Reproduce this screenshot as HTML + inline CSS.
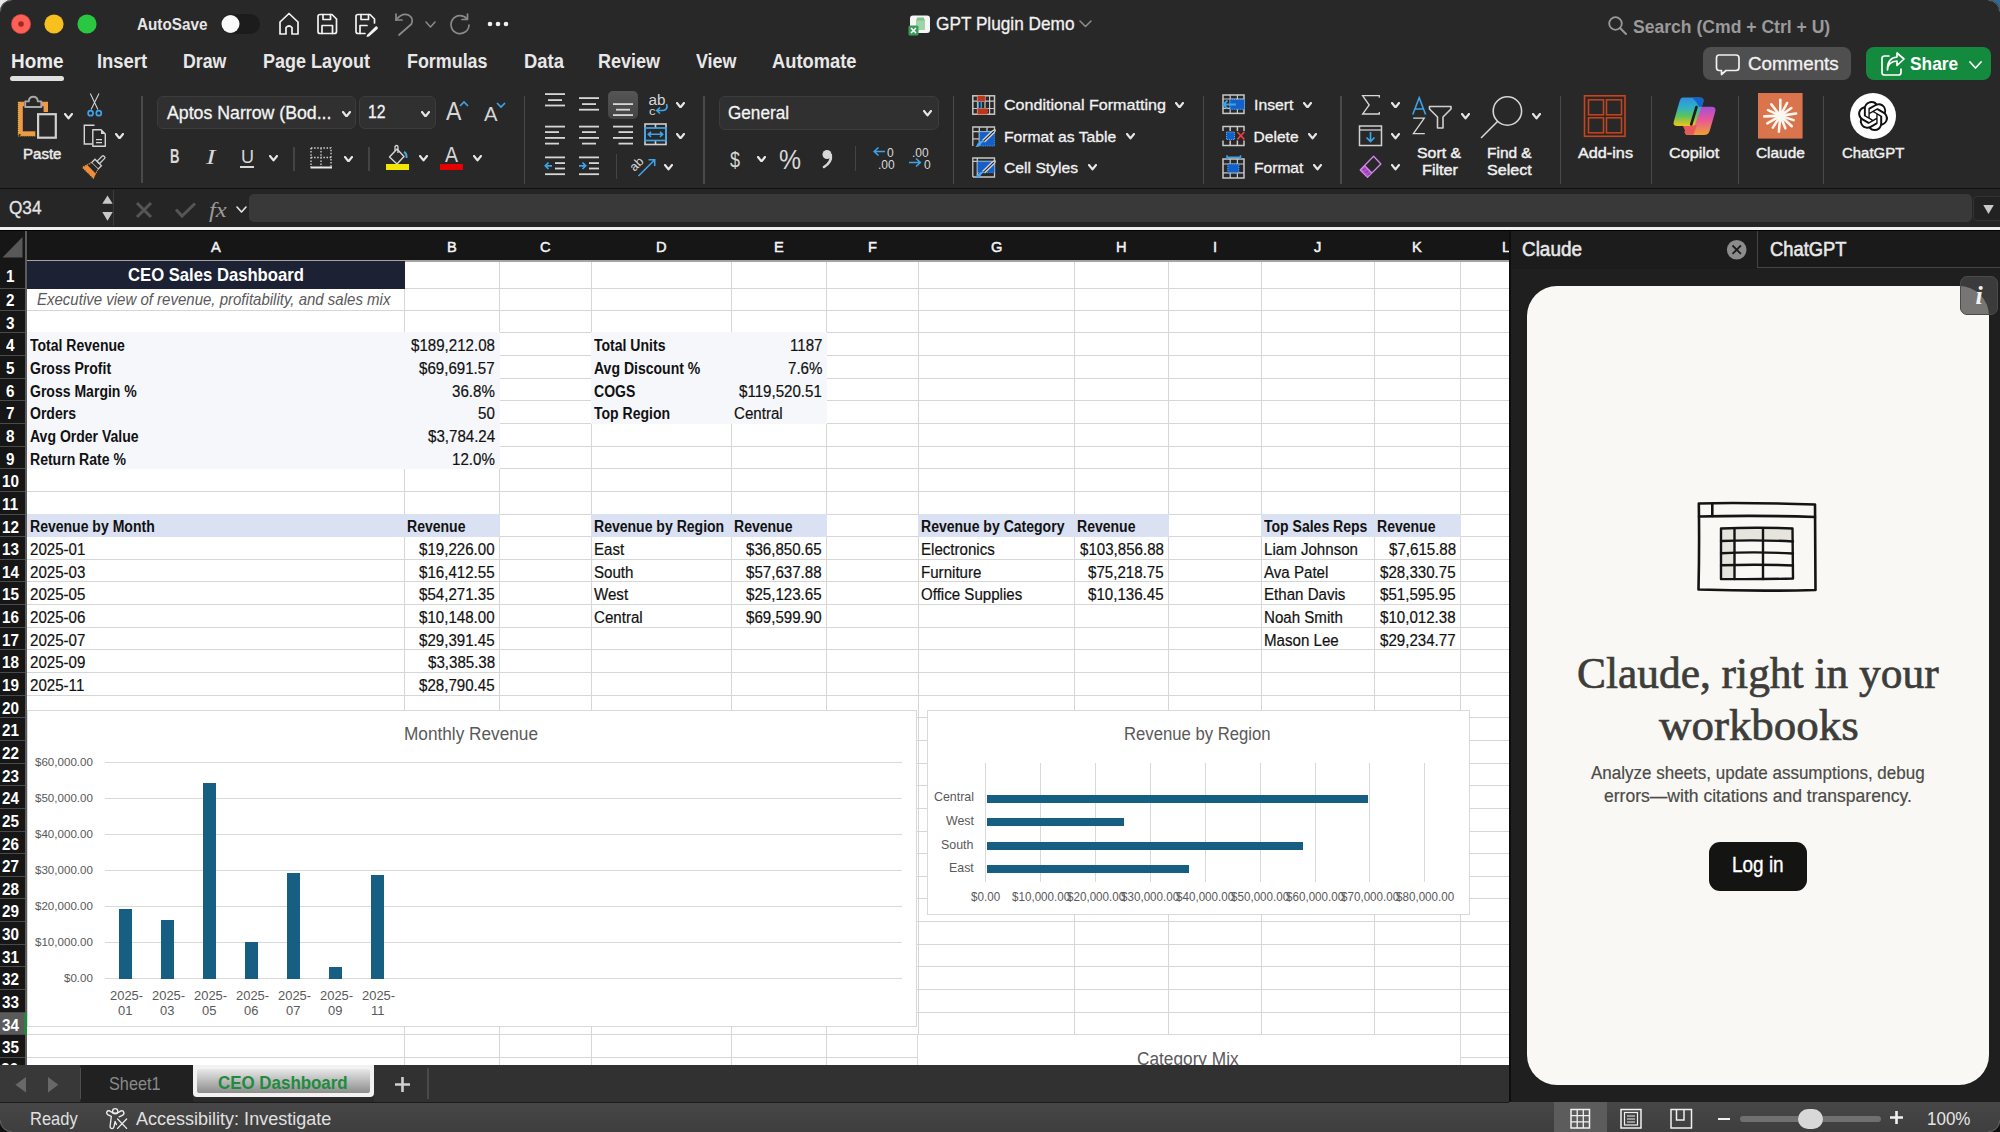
<!DOCTYPE html>
<html><head><meta charset="utf-8"><title>Excel</title>
<style>
html,body{margin:0;padding:0;width:2000px;height:1132px;overflow:hidden;background:#000;}
body{position:relative;font-family:"Liberation Sans", sans-serif;}
</style></head><body>
<div style="position:absolute;left:0.00px;top:0.00px;width:2000.00px;height:1132.00px;background:#000;"></div>
<div style="position:absolute;left:0.00px;top:0.00px;width:2000.00px;height:189.00px;background:#282828;"></div>
<div style="position:absolute;left:0.00px;top:187.50px;width:2000.00px;height:2.50px;background:#101010;"></div>
<div style="position:absolute;left:0.00px;top:189.00px;width:2000.00px;height:38.00px;background:#252525;"></div>
<div style="position:absolute;left:0.00px;top:226.80px;width:2000.00px;height:3.00px;background:#efefef;"></div>
<div style="position:absolute;left:0.00px;top:230.50px;width:1509.00px;height:835.00px;background:#ffffff;"></div>
<div style="position:absolute;left:0.00px;top:230.50px;width:1509.00px;height:30.00px;background:#161616;"></div>
<div style="position:absolute;left:0.00px;top:260.40px;width:1509.00px;height:1.60px;background:#a4a4a4;"></div>
<div style="position:absolute;left:0.00px;top:230.50px;width:25.50px;height:835.00px;background:#161616;"></div>
<div style="position:absolute;left:25.30px;top:230.50px;width:1.80px;height:835.00px;background:#5c5c5c;"></div>
<svg style="position:absolute;left:0.00px;top:230.00px;" width="27.00" height="31.00" viewBox="0 0 27.00 31.00"><polygon points="2.5,27.5 22.5,27.5 22.5,7" fill="#585858"/></svg>
<svg style="position:absolute;left:0.00px;top:0.00px;shape-rendering:crispEdges;" width="1509.00" height="1065.00" viewBox="0 0 1509.00 1065.00"><rect x="27" y="288" width="1482" height="1" fill="#d6d6d6"/><rect x="27" y="310" width="1482" height="1" fill="#d6d6d6"/><rect x="27" y="332" width="1482" height="1" fill="#d6d6d6"/><rect x="27" y="355" width="1482" height="1" fill="#d6d6d6"/><rect x="27" y="378" width="1482" height="1" fill="#d6d6d6"/><rect x="27" y="400" width="1482" height="1" fill="#d6d6d6"/><rect x="27" y="423" width="1482" height="1" fill="#d6d6d6"/><rect x="27" y="446" width="1482" height="1" fill="#d6d6d6"/><rect x="27" y="468" width="1482" height="1" fill="#d6d6d6"/><rect x="27" y="491" width="1482" height="1" fill="#d6d6d6"/><rect x="27" y="514" width="1482" height="1" fill="#d6d6d6"/><rect x="27" y="536" width="1482" height="1" fill="#d6d6d6"/><rect x="27" y="559" width="1482" height="1" fill="#d6d6d6"/><rect x="27" y="581" width="1482" height="1" fill="#d6d6d6"/><rect x="27" y="604" width="1482" height="1" fill="#d6d6d6"/><rect x="27" y="627" width="1482" height="1" fill="#d6d6d6"/><rect x="27" y="649" width="1482" height="1" fill="#d6d6d6"/><rect x="27" y="672" width="1482" height="1" fill="#d6d6d6"/><rect x="27" y="695" width="1482" height="1" fill="#d6d6d6"/><rect x="27" y="717" width="1482" height="1" fill="#d6d6d6"/><rect x="27" y="740" width="1482" height="1" fill="#d6d6d6"/><rect x="27" y="763" width="1482" height="1" fill="#d6d6d6"/><rect x="27" y="785" width="1482" height="1" fill="#d6d6d6"/><rect x="27" y="808" width="1482" height="1" fill="#d6d6d6"/><rect x="27" y="831" width="1482" height="1" fill="#d6d6d6"/><rect x="27" y="853" width="1482" height="1" fill="#d6d6d6"/><rect x="27" y="876" width="1482" height="1" fill="#d6d6d6"/><rect x="27" y="898" width="1482" height="1" fill="#d6d6d6"/><rect x="27" y="921" width="1482" height="1" fill="#d6d6d6"/><rect x="27" y="944" width="1482" height="1" fill="#d6d6d6"/><rect x="27" y="966" width="1482" height="1" fill="#d6d6d6"/><rect x="27" y="989" width="1482" height="1" fill="#d6d6d6"/><rect x="27" y="1012" width="1482" height="1" fill="#d6d6d6"/><rect x="27" y="1034" width="1482" height="1" fill="#d6d6d6"/><rect x="27" y="1057" width="1482" height="1" fill="#d6d6d6"/><rect x="404" y="262" width="1" height="803" fill="#d6d6d6"/><rect x="499" y="262" width="1" height="803" fill="#d6d6d6"/><rect x="591" y="262" width="1" height="803" fill="#d6d6d6"/><rect x="731" y="262" width="1" height="803" fill="#d6d6d6"/><rect x="826" y="262" width="1" height="803" fill="#d6d6d6"/><rect x="918" y="262" width="1" height="803" fill="#d6d6d6"/><rect x="1074" y="262" width="1" height="803" fill="#d6d6d6"/><rect x="1168" y="262" width="1" height="803" fill="#d6d6d6"/><rect x="1261" y="262" width="1" height="803" fill="#d6d6d6"/><rect x="1374" y="262" width="1" height="803" fill="#d6d6d6"/><rect x="1460" y="262" width="1" height="803" fill="#d6d6d6"/><rect x="1552" y="262" width="1" height="803" fill="#d6d6d6"/><rect x="27" y="261" width="378" height="28" fill="#1c2233"/><rect x="27" y="332" width="473" height="137" fill="#f5f7fb"/><rect x="591" y="332" width="236" height="92" fill="#f5f7fb"/><rect x="27" y="514" width="473" height="23" fill="#d9e1f2"/><rect x="591" y="514" width="236" height="23" fill="#d9e1f2"/><rect x="918" y="514" width="251" height="23" fill="#d9e1f2"/><rect x="1261" y="514" width="200" height="23" fill="#d9e1f2"/></svg>
<div style="position:absolute;white-space:nowrap;font-family:'Liberation Sans', sans-serif;font-size:15.41px;line-height:15.41px;font-weight:400;color:#f4f4f4;top:238.95px;-webkit-text-stroke:0.50px #f4f4f4;left:210.92px;transform-origin:0 0;transform:scaleX(0.9500);">A</div>
<div style="position:absolute;white-space:nowrap;font-family:'Liberation Sans', sans-serif;font-size:15.41px;line-height:15.41px;font-weight:400;color:#f4f4f4;top:238.95px;-webkit-text-stroke:0.50px #f4f4f4;left:446.92px;transform-origin:0 0;transform:scaleX(0.9500);">B</div>
<div style="position:absolute;white-space:nowrap;font-family:'Liberation Sans', sans-serif;font-size:15.41px;line-height:15.41px;font-weight:400;color:#f4f4f4;top:238.95px;-webkit-text-stroke:0.50px #f4f4f4;left:540.01px;transform-origin:0 0;transform:scaleX(0.9500);">C</div>
<div style="position:absolute;white-space:nowrap;font-family:'Liberation Sans', sans-serif;font-size:15.41px;line-height:15.41px;font-weight:400;color:#f4f4f4;top:238.95px;-webkit-text-stroke:0.50px #f4f4f4;left:656.01px;transform-origin:0 0;transform:scaleX(0.9500);">D</div>
<div style="position:absolute;white-space:nowrap;font-family:'Liberation Sans', sans-serif;font-size:15.41px;line-height:15.41px;font-weight:400;color:#f4f4f4;top:238.95px;-webkit-text-stroke:0.50px #f4f4f4;left:773.92px;transform-origin:0 0;transform:scaleX(0.9500);">E</div>
<div style="position:absolute;white-space:nowrap;font-family:'Liberation Sans', sans-serif;font-size:15.41px;line-height:15.41px;font-weight:400;color:#f4f4f4;top:238.95px;-webkit-text-stroke:0.50px #f4f4f4;left:867.84px;transform-origin:0 0;transform:scaleX(0.9500);">F</div>
<div style="position:absolute;white-space:nowrap;font-family:'Liberation Sans', sans-serif;font-size:15.41px;line-height:15.41px;font-weight:400;color:#f4f4f4;top:238.95px;-webkit-text-stroke:0.50px #f4f4f4;left:990.61px;transform-origin:0 0;transform:scaleX(0.9500);">G</div>
<div style="position:absolute;white-space:nowrap;font-family:'Liberation Sans', sans-serif;font-size:15.41px;line-height:15.41px;font-weight:400;color:#f4f4f4;top:238.95px;-webkit-text-stroke:0.50px #f4f4f4;left:1116.01px;transform-origin:0 0;transform:scaleX(0.9500);">H</div>
<div style="position:absolute;white-space:nowrap;font-family:'Liberation Sans', sans-serif;font-size:15.41px;line-height:15.41px;font-weight:400;color:#f4f4f4;top:238.95px;-webkit-text-stroke:0.50px #f4f4f4;left:1212.77px;transform-origin:0 0;transform:scaleX(0.9500);">I</div>
<div style="position:absolute;white-space:nowrap;font-family:'Liberation Sans', sans-serif;font-size:15.41px;line-height:15.41px;font-weight:400;color:#f4f4f4;top:238.95px;-webkit-text-stroke:0.50px #f4f4f4;left:1314.14px;transform-origin:0 0;transform:scaleX(0.9500);">J</div>
<div style="position:absolute;white-space:nowrap;font-family:'Liberation Sans', sans-serif;font-size:15.41px;line-height:15.41px;font-weight:400;color:#f4f4f4;top:238.95px;-webkit-text-stroke:0.50px #f4f4f4;left:1412.42px;transform-origin:0 0;transform:scaleX(0.9500);">K</div>
<div style="position:absolute;white-space:nowrap;font-family:'Liberation Sans', sans-serif;font-size:15.41px;line-height:15.41px;font-weight:400;color:#f4f4f4;top:238.95px;-webkit-text-stroke:0.50px #f4f4f4;left:1502.24px;transform-origin:0 0;transform:scaleX(0.9500);">L</div>
<div style="position:absolute;left:0.00px;top:288.00px;width:25.30px;height:1.20px;background:#4a4a4a;"></div>
<div style="position:absolute;white-space:nowrap;font-family:'Liberation Sans', sans-serif;font-size:16.42px;line-height:16.42px;font-weight:700;color:#ffffff;top:267.99px;left:5.76px;transform-origin:0 0;transform:scaleX(0.9300);">1</div>
<div style="position:absolute;left:0.00px;top:310.00px;width:25.30px;height:1.20px;background:#4a4a4a;"></div>
<div style="position:absolute;white-space:nowrap;font-family:'Liberation Sans', sans-serif;font-size:16.42px;line-height:16.42px;font-weight:700;color:#ffffff;top:292.14px;left:5.76px;transform-origin:0 0;transform:scaleX(0.9300);">2</div>
<div style="position:absolute;left:0.00px;top:332.00px;width:25.30px;height:1.20px;background:#4a4a4a;"></div>
<div style="position:absolute;white-space:nowrap;font-family:'Liberation Sans', sans-serif;font-size:16.42px;line-height:16.42px;font-weight:700;color:#ffffff;top:314.78px;left:5.76px;transform-origin:0 0;transform:scaleX(0.9300);">3</div>
<div style="position:absolute;left:0.00px;top:355.00px;width:25.30px;height:1.20px;background:#4a4a4a;"></div>
<div style="position:absolute;white-space:nowrap;font-family:'Liberation Sans', sans-serif;font-size:16.42px;line-height:16.42px;font-weight:700;color:#ffffff;top:337.42px;left:5.76px;transform-origin:0 0;transform:scaleX(0.9300);">4</div>
<div style="position:absolute;left:0.00px;top:378.00px;width:25.30px;height:1.20px;background:#4a4a4a;"></div>
<div style="position:absolute;white-space:nowrap;font-family:'Liberation Sans', sans-serif;font-size:16.42px;line-height:16.42px;font-weight:700;color:#ffffff;top:360.06px;left:5.76px;transform-origin:0 0;transform:scaleX(0.9300);">5</div>
<div style="position:absolute;left:0.00px;top:400.00px;width:25.30px;height:1.20px;background:#4a4a4a;"></div>
<div style="position:absolute;white-space:nowrap;font-family:'Liberation Sans', sans-serif;font-size:16.42px;line-height:16.42px;font-weight:700;color:#ffffff;top:382.70px;left:5.76px;transform-origin:0 0;transform:scaleX(0.9300);">6</div>
<div style="position:absolute;left:0.00px;top:423.00px;width:25.30px;height:1.20px;background:#4a4a4a;"></div>
<div style="position:absolute;white-space:nowrap;font-family:'Liberation Sans', sans-serif;font-size:16.42px;line-height:16.42px;font-weight:700;color:#ffffff;top:405.34px;left:5.76px;transform-origin:0 0;transform:scaleX(0.9300);">7</div>
<div style="position:absolute;left:0.00px;top:446.00px;width:25.30px;height:1.20px;background:#4a4a4a;"></div>
<div style="position:absolute;white-space:nowrap;font-family:'Liberation Sans', sans-serif;font-size:16.42px;line-height:16.42px;font-weight:700;color:#ffffff;top:427.98px;left:5.76px;transform-origin:0 0;transform:scaleX(0.9300);">8</div>
<div style="position:absolute;left:0.00px;top:468.00px;width:25.30px;height:1.20px;background:#4a4a4a;"></div>
<div style="position:absolute;white-space:nowrap;font-family:'Liberation Sans', sans-serif;font-size:16.42px;line-height:16.42px;font-weight:700;color:#ffffff;top:450.62px;left:5.76px;transform-origin:0 0;transform:scaleX(0.9300);">9</div>
<div style="position:absolute;left:0.00px;top:491.00px;width:25.30px;height:1.20px;background:#4a4a4a;"></div>
<div style="position:absolute;white-space:nowrap;font-family:'Liberation Sans', sans-serif;font-size:16.42px;line-height:16.42px;font-weight:700;color:#ffffff;top:473.26px;left:1.50px;transform-origin:0 0;transform:scaleX(0.9300);">10</div>
<div style="position:absolute;left:0.00px;top:514.00px;width:25.30px;height:1.20px;background:#4a4a4a;"></div>
<div style="position:absolute;white-space:nowrap;font-family:'Liberation Sans', sans-serif;font-size:16.42px;line-height:16.42px;font-weight:700;color:#ffffff;top:495.90px;left:1.92px;transform-origin:0 0;transform:scaleX(0.9300);">11</div>
<div style="position:absolute;left:0.00px;top:536.00px;width:25.30px;height:1.20px;background:#4a4a4a;"></div>
<div style="position:absolute;white-space:nowrap;font-family:'Liberation Sans', sans-serif;font-size:16.42px;line-height:16.42px;font-weight:700;color:#ffffff;top:518.54px;left:1.50px;transform-origin:0 0;transform:scaleX(0.9300);">12</div>
<div style="position:absolute;left:0.00px;top:559.00px;width:25.30px;height:1.20px;background:#4a4a4a;"></div>
<div style="position:absolute;white-space:nowrap;font-family:'Liberation Sans', sans-serif;font-size:16.42px;line-height:16.42px;font-weight:700;color:#ffffff;top:541.18px;left:1.50px;transform-origin:0 0;transform:scaleX(0.9300);">13</div>
<div style="position:absolute;left:0.00px;top:581.00px;width:25.30px;height:1.20px;background:#4a4a4a;"></div>
<div style="position:absolute;white-space:nowrap;font-family:'Liberation Sans', sans-serif;font-size:16.42px;line-height:16.42px;font-weight:700;color:#ffffff;top:563.82px;left:1.50px;transform-origin:0 0;transform:scaleX(0.9300);">14</div>
<div style="position:absolute;left:0.00px;top:604.00px;width:25.30px;height:1.20px;background:#4a4a4a;"></div>
<div style="position:absolute;white-space:nowrap;font-family:'Liberation Sans', sans-serif;font-size:16.42px;line-height:16.42px;font-weight:700;color:#ffffff;top:586.46px;left:1.50px;transform-origin:0 0;transform:scaleX(0.9300);">15</div>
<div style="position:absolute;left:0.00px;top:627.00px;width:25.30px;height:1.20px;background:#4a4a4a;"></div>
<div style="position:absolute;white-space:nowrap;font-family:'Liberation Sans', sans-serif;font-size:16.42px;line-height:16.42px;font-weight:700;color:#ffffff;top:609.10px;left:1.50px;transform-origin:0 0;transform:scaleX(0.9300);">16</div>
<div style="position:absolute;left:0.00px;top:649.00px;width:25.30px;height:1.20px;background:#4a4a4a;"></div>
<div style="position:absolute;white-space:nowrap;font-family:'Liberation Sans', sans-serif;font-size:16.42px;line-height:16.42px;font-weight:700;color:#ffffff;top:631.74px;left:1.50px;transform-origin:0 0;transform:scaleX(0.9300);">17</div>
<div style="position:absolute;left:0.00px;top:672.00px;width:25.30px;height:1.20px;background:#4a4a4a;"></div>
<div style="position:absolute;white-space:nowrap;font-family:'Liberation Sans', sans-serif;font-size:16.42px;line-height:16.42px;font-weight:700;color:#ffffff;top:654.38px;left:1.50px;transform-origin:0 0;transform:scaleX(0.9300);">18</div>
<div style="position:absolute;left:0.00px;top:695.00px;width:25.30px;height:1.20px;background:#4a4a4a;"></div>
<div style="position:absolute;white-space:nowrap;font-family:'Liberation Sans', sans-serif;font-size:16.42px;line-height:16.42px;font-weight:700;color:#ffffff;top:677.02px;left:1.50px;transform-origin:0 0;transform:scaleX(0.9300);">19</div>
<div style="position:absolute;left:0.00px;top:717.00px;width:25.30px;height:1.20px;background:#4a4a4a;"></div>
<div style="position:absolute;white-space:nowrap;font-family:'Liberation Sans', sans-serif;font-size:16.42px;line-height:16.42px;font-weight:700;color:#ffffff;top:699.66px;left:1.50px;transform-origin:0 0;transform:scaleX(0.9300);">20</div>
<div style="position:absolute;left:0.00px;top:740.00px;width:25.30px;height:1.20px;background:#4a4a4a;"></div>
<div style="position:absolute;white-space:nowrap;font-family:'Liberation Sans', sans-serif;font-size:16.42px;line-height:16.42px;font-weight:700;color:#ffffff;top:722.30px;left:1.50px;transform-origin:0 0;transform:scaleX(0.9300);">21</div>
<div style="position:absolute;left:0.00px;top:763.00px;width:25.30px;height:1.20px;background:#4a4a4a;"></div>
<div style="position:absolute;white-space:nowrap;font-family:'Liberation Sans', sans-serif;font-size:16.42px;line-height:16.42px;font-weight:700;color:#ffffff;top:744.94px;left:1.50px;transform-origin:0 0;transform:scaleX(0.9300);">22</div>
<div style="position:absolute;left:0.00px;top:785.00px;width:25.30px;height:1.20px;background:#4a4a4a;"></div>
<div style="position:absolute;white-space:nowrap;font-family:'Liberation Sans', sans-serif;font-size:16.42px;line-height:16.42px;font-weight:700;color:#ffffff;top:767.58px;left:1.50px;transform-origin:0 0;transform:scaleX(0.9300);">23</div>
<div style="position:absolute;left:0.00px;top:808.00px;width:25.30px;height:1.20px;background:#4a4a4a;"></div>
<div style="position:absolute;white-space:nowrap;font-family:'Liberation Sans', sans-serif;font-size:16.42px;line-height:16.42px;font-weight:700;color:#ffffff;top:790.22px;left:1.50px;transform-origin:0 0;transform:scaleX(0.9300);">24</div>
<div style="position:absolute;left:0.00px;top:831.00px;width:25.30px;height:1.20px;background:#4a4a4a;"></div>
<div style="position:absolute;white-space:nowrap;font-family:'Liberation Sans', sans-serif;font-size:16.42px;line-height:16.42px;font-weight:700;color:#ffffff;top:812.86px;left:1.50px;transform-origin:0 0;transform:scaleX(0.9300);">25</div>
<div style="position:absolute;left:0.00px;top:853.00px;width:25.30px;height:1.20px;background:#4a4a4a;"></div>
<div style="position:absolute;white-space:nowrap;font-family:'Liberation Sans', sans-serif;font-size:16.42px;line-height:16.42px;font-weight:700;color:#ffffff;top:835.50px;left:1.50px;transform-origin:0 0;transform:scaleX(0.9300);">26</div>
<div style="position:absolute;left:0.00px;top:876.00px;width:25.30px;height:1.20px;background:#4a4a4a;"></div>
<div style="position:absolute;white-space:nowrap;font-family:'Liberation Sans', sans-serif;font-size:16.42px;line-height:16.42px;font-weight:700;color:#ffffff;top:858.14px;left:1.50px;transform-origin:0 0;transform:scaleX(0.9300);">27</div>
<div style="position:absolute;left:0.00px;top:898.00px;width:25.30px;height:1.20px;background:#4a4a4a;"></div>
<div style="position:absolute;white-space:nowrap;font-family:'Liberation Sans', sans-serif;font-size:16.42px;line-height:16.42px;font-weight:700;color:#ffffff;top:880.78px;left:1.50px;transform-origin:0 0;transform:scaleX(0.9300);">28</div>
<div style="position:absolute;left:0.00px;top:921.00px;width:25.30px;height:1.20px;background:#4a4a4a;"></div>
<div style="position:absolute;white-space:nowrap;font-family:'Liberation Sans', sans-serif;font-size:16.42px;line-height:16.42px;font-weight:700;color:#ffffff;top:903.42px;left:1.50px;transform-origin:0 0;transform:scaleX(0.9300);">29</div>
<div style="position:absolute;left:0.00px;top:944.00px;width:25.30px;height:1.20px;background:#4a4a4a;"></div>
<div style="position:absolute;white-space:nowrap;font-family:'Liberation Sans', sans-serif;font-size:16.42px;line-height:16.42px;font-weight:700;color:#ffffff;top:926.06px;left:1.50px;transform-origin:0 0;transform:scaleX(0.9300);">30</div>
<div style="position:absolute;left:0.00px;top:966.00px;width:25.30px;height:1.20px;background:#4a4a4a;"></div>
<div style="position:absolute;white-space:nowrap;font-family:'Liberation Sans', sans-serif;font-size:16.42px;line-height:16.42px;font-weight:700;color:#ffffff;top:948.70px;left:1.50px;transform-origin:0 0;transform:scaleX(0.9300);">31</div>
<div style="position:absolute;left:0.00px;top:989.00px;width:25.30px;height:1.20px;background:#4a4a4a;"></div>
<div style="position:absolute;white-space:nowrap;font-family:'Liberation Sans', sans-serif;font-size:16.42px;line-height:16.42px;font-weight:700;color:#ffffff;top:971.34px;left:1.50px;transform-origin:0 0;transform:scaleX(0.9300);">32</div>
<div style="position:absolute;left:0.00px;top:1012.00px;width:25.30px;height:1.20px;background:#4a4a4a;"></div>
<div style="position:absolute;white-space:nowrap;font-family:'Liberation Sans', sans-serif;font-size:16.42px;line-height:16.42px;font-weight:700;color:#ffffff;top:993.98px;left:1.50px;transform-origin:0 0;transform:scaleX(0.9300);">33</div>
<div style="position:absolute;left:0.00px;top:1013.14px;width:25.30px;height:22.14px;background:#5a5a5a;"></div>
<div style="position:absolute;left:24.00px;top:1013.14px;width:3.00px;height:22.14px;background:#1f8a3b;"></div>
<div style="position:absolute;left:0.00px;top:1034.00px;width:25.30px;height:1.20px;background:#4a4a4a;"></div>
<div style="position:absolute;white-space:nowrap;font-family:'Liberation Sans', sans-serif;font-size:16.42px;line-height:16.42px;font-weight:700;color:#ffffff;top:1016.62px;left:1.50px;transform-origin:0 0;transform:scaleX(0.9300);">34</div>
<div style="position:absolute;left:0.00px;top:1057.00px;width:25.30px;height:1.20px;background:#4a4a4a;"></div>
<div style="position:absolute;white-space:nowrap;font-family:'Liberation Sans', sans-serif;font-size:16.42px;line-height:16.42px;font-weight:700;color:#ffffff;top:1039.26px;left:1.50px;transform-origin:0 0;transform:scaleX(0.9300);">35</div>
<div style="position:absolute;white-space:nowrap;font-family:'Liberation Sans', sans-serif;font-size:16.57px;line-height:16.57px;font-weight:700;color:#ffffff;top:1061.68px;left:1.43px;transform-origin:0 0;transform:scaleX(0.9300);">36</div>
<div style="position:absolute;white-space:nowrap;font-family:'Liberation Sans', sans-serif;font-size:18.60px;line-height:18.60px;font-weight:700;color:#ffffff;top:266.04px;left:128.00px;transform-origin:0 0;transform:scaleX(0.8958);">CEO Sales Dashboard</div>
<div style="position:absolute;white-space:nowrap;font-family:'Liberation Sans', sans-serif;font-size:16.57px;line-height:16.57px;font-weight:400;color:#595959;top:291.77px;font-style:italic;left:37.00px;transform-origin:0 0;transform:scaleX(0.9061);">Executive view of revenue, profitability, and sales mix</div>
<div style="position:absolute;white-space:nowrap;font-family:'Liberation Sans', sans-serif;font-size:16.42px;line-height:16.42px;font-weight:700;color:#111111;top:337.32px;left:30.00px;transform-origin:0 0;transform:scaleX(0.8550);">Total Revenue</div>
<div style="position:absolute;white-space:nowrap;font-family:'Liberation Sans', sans-serif;font-size:16.42px;line-height:16.42px;font-weight:400;color:#111111;top:337.32px;-webkit-text-stroke:0.20px #111111;left:410.95px;transform-origin:0 0;transform:scaleX(0.9200);">$189,212.08</div>
<div style="position:absolute;white-space:nowrap;font-family:'Liberation Sans', sans-serif;font-size:16.42px;line-height:16.42px;font-weight:700;color:#111111;top:359.96px;left:30.00px;transform-origin:0 0;transform:scaleX(0.8550);">Gross Profit</div>
<div style="position:absolute;white-space:nowrap;font-family:'Liberation Sans', sans-serif;font-size:16.42px;line-height:16.42px;font-weight:400;color:#111111;top:359.96px;-webkit-text-stroke:0.20px #111111;left:419.37px;transform-origin:0 0;transform:scaleX(0.9200);">$69,691.57</div>
<div style="position:absolute;white-space:nowrap;font-family:'Liberation Sans', sans-serif;font-size:16.42px;line-height:16.42px;font-weight:700;color:#111111;top:382.60px;left:30.00px;transform-origin:0 0;transform:scaleX(0.8550);">Gross Margin %</div>
<div style="position:absolute;white-space:nowrap;font-family:'Liberation Sans', sans-serif;font-size:16.42px;line-height:16.42px;font-weight:400;color:#111111;top:382.60px;-webkit-text-stroke:0.20px #111111;left:452.16px;transform-origin:0 0;transform:scaleX(0.9200);">36.8%</div>
<div style="position:absolute;white-space:nowrap;font-family:'Liberation Sans', sans-serif;font-size:16.42px;line-height:16.42px;font-weight:700;color:#111111;top:405.24px;left:30.00px;transform-origin:0 0;transform:scaleX(0.8550);">Orders</div>
<div style="position:absolute;white-space:nowrap;font-family:'Liberation Sans', sans-serif;font-size:16.42px;line-height:16.42px;font-weight:400;color:#111111;top:405.24px;-webkit-text-stroke:0.20px #111111;left:478.19px;transform-origin:0 0;transform:scaleX(0.9200);">50</div>
<div style="position:absolute;white-space:nowrap;font-family:'Liberation Sans', sans-serif;font-size:16.42px;line-height:16.42px;font-weight:700;color:#111111;top:427.88px;left:30.00px;transform-origin:0 0;transform:scaleX(0.8550);">Avg Order Value</div>
<div style="position:absolute;white-space:nowrap;font-family:'Liberation Sans', sans-serif;font-size:16.42px;line-height:16.42px;font-weight:400;color:#111111;top:427.88px;-webkit-text-stroke:0.20px #111111;left:427.76px;transform-origin:0 0;transform:scaleX(0.9200);">$3,784.24</div>
<div style="position:absolute;white-space:nowrap;font-family:'Liberation Sans', sans-serif;font-size:16.42px;line-height:16.42px;font-weight:700;color:#111111;top:450.52px;left:30.00px;transform-origin:0 0;transform:scaleX(0.8550);">Return Rate %</div>
<div style="position:absolute;white-space:nowrap;font-family:'Liberation Sans', sans-serif;font-size:16.42px;line-height:16.42px;font-weight:400;color:#111111;top:450.52px;-webkit-text-stroke:0.20px #111111;left:452.16px;transform-origin:0 0;transform:scaleX(0.9200);">12.0%</div>
<div style="position:absolute;white-space:nowrap;font-family:'Liberation Sans', sans-serif;font-size:16.42px;line-height:16.42px;font-weight:700;color:#111111;top:337.32px;left:594.00px;transform-origin:0 0;transform:scaleX(0.8550);">Total Units</div>
<div style="position:absolute;white-space:nowrap;font-family:'Liberation Sans', sans-serif;font-size:16.42px;line-height:16.42px;font-weight:400;color:#111111;top:337.32px;-webkit-text-stroke:0.20px #111111;left:789.51px;transform-origin:0 0;transform:scaleX(0.9200);">1187</div>
<div style="position:absolute;white-space:nowrap;font-family:'Liberation Sans', sans-serif;font-size:16.42px;line-height:16.42px;font-weight:700;color:#111111;top:359.96px;left:594.00px;transform-origin:0 0;transform:scaleX(0.8550);">Avg Discount %</div>
<div style="position:absolute;white-space:nowrap;font-family:'Liberation Sans', sans-serif;font-size:16.42px;line-height:16.42px;font-weight:400;color:#111111;top:359.96px;-webkit-text-stroke:0.20px #111111;left:787.55px;transform-origin:0 0;transform:scaleX(0.9200);">7.6%</div>
<div style="position:absolute;white-space:nowrap;font-family:'Liberation Sans', sans-serif;font-size:16.42px;line-height:16.42px;font-weight:700;color:#111111;top:382.60px;left:594.00px;transform-origin:0 0;transform:scaleX(0.8550);">COGS</div>
<div style="position:absolute;white-space:nowrap;font-family:'Liberation Sans', sans-serif;font-size:16.42px;line-height:16.42px;font-weight:400;color:#111111;top:382.60px;-webkit-text-stroke:0.20px #111111;left:739.08px;transform-origin:0 0;transform:scaleX(0.9200);">$119,520.51</div>
<div style="position:absolute;white-space:nowrap;font-family:'Liberation Sans', sans-serif;font-size:16.42px;line-height:16.42px;font-weight:700;color:#111111;top:405.24px;left:594.00px;transform-origin:0 0;transform:scaleX(0.8550);">Top Region</div>
<div style="position:absolute;white-space:nowrap;font-family:'Liberation Sans', sans-serif;font-size:16.42px;line-height:16.42px;font-weight:400;color:#111111;top:405.24px;-webkit-text-stroke:0.20px #111111;left:734.00px;transform-origin:0 0;transform:scaleX(0.9200);">Central</div>
<div style="position:absolute;white-space:nowrap;font-family:'Liberation Sans', sans-serif;font-size:16.42px;line-height:16.42px;font-weight:700;color:#111111;top:518.44px;left:30.00px;transform-origin:0 0;transform:scaleX(0.8550);">Revenue by Month</div>
<div style="position:absolute;white-space:nowrap;font-family:'Liberation Sans', sans-serif;font-size:16.42px;line-height:16.42px;font-weight:700;color:#111111;top:518.44px;left:407.00px;transform-origin:0 0;transform:scaleX(0.8550);">Revenue</div>
<div style="position:absolute;white-space:nowrap;font-family:'Liberation Sans', sans-serif;font-size:16.42px;line-height:16.42px;font-weight:700;color:#111111;top:518.44px;left:594.00px;transform-origin:0 0;transform:scaleX(0.8550);">Revenue by Region</div>
<div style="position:absolute;white-space:nowrap;font-family:'Liberation Sans', sans-serif;font-size:16.42px;line-height:16.42px;font-weight:700;color:#111111;top:518.44px;left:734.00px;transform-origin:0 0;transform:scaleX(0.8550);">Revenue</div>
<div style="position:absolute;white-space:nowrap;font-family:'Liberation Sans', sans-serif;font-size:16.42px;line-height:16.42px;font-weight:700;color:#111111;top:518.44px;left:921.00px;transform-origin:0 0;transform:scaleX(0.8550);">Revenue by Category</div>
<div style="position:absolute;white-space:nowrap;font-family:'Liberation Sans', sans-serif;font-size:16.42px;line-height:16.42px;font-weight:700;color:#111111;top:518.44px;left:1077.00px;transform-origin:0 0;transform:scaleX(0.8550);">Revenue</div>
<div style="position:absolute;white-space:nowrap;font-family:'Liberation Sans', sans-serif;font-size:16.42px;line-height:16.42px;font-weight:700;color:#111111;top:518.44px;left:1264.00px;transform-origin:0 0;transform:scaleX(0.8550);">Top Sales Reps</div>
<div style="position:absolute;white-space:nowrap;font-family:'Liberation Sans', sans-serif;font-size:16.42px;line-height:16.42px;font-weight:700;color:#111111;top:518.44px;left:1377.00px;transform-origin:0 0;transform:scaleX(0.8550);">Revenue</div>
<div style="position:absolute;white-space:nowrap;font-family:'Liberation Sans', sans-serif;font-size:16.42px;line-height:16.42px;font-weight:400;color:#111111;top:541.08px;-webkit-text-stroke:0.20px #111111;left:30.00px;transform-origin:0 0;transform:scaleX(0.9200);">2025-01</div>
<div style="position:absolute;white-space:nowrap;font-family:'Liberation Sans', sans-serif;font-size:16.42px;line-height:16.42px;font-weight:400;color:#111111;top:541.08px;-webkit-text-stroke:0.20px #111111;left:419.37px;transform-origin:0 0;transform:scaleX(0.9200);">$19,226.00</div>
<div style="position:absolute;white-space:nowrap;font-family:'Liberation Sans', sans-serif;font-size:16.42px;line-height:16.42px;font-weight:400;color:#111111;top:563.72px;-webkit-text-stroke:0.20px #111111;left:30.00px;transform-origin:0 0;transform:scaleX(0.9200);">2025-03</div>
<div style="position:absolute;white-space:nowrap;font-family:'Liberation Sans', sans-serif;font-size:16.42px;line-height:16.42px;font-weight:400;color:#111111;top:563.72px;-webkit-text-stroke:0.20px #111111;left:419.37px;transform-origin:0 0;transform:scaleX(0.9200);">$16,412.55</div>
<div style="position:absolute;white-space:nowrap;font-family:'Liberation Sans', sans-serif;font-size:16.42px;line-height:16.42px;font-weight:400;color:#111111;top:586.36px;-webkit-text-stroke:0.20px #111111;left:30.00px;transform-origin:0 0;transform:scaleX(0.9200);">2025-05</div>
<div style="position:absolute;white-space:nowrap;font-family:'Liberation Sans', sans-serif;font-size:16.42px;line-height:16.42px;font-weight:400;color:#111111;top:586.36px;-webkit-text-stroke:0.20px #111111;left:419.37px;transform-origin:0 0;transform:scaleX(0.9200);">$54,271.35</div>
<div style="position:absolute;white-space:nowrap;font-family:'Liberation Sans', sans-serif;font-size:16.42px;line-height:16.42px;font-weight:400;color:#111111;top:609.00px;-webkit-text-stroke:0.20px #111111;left:30.00px;transform-origin:0 0;transform:scaleX(0.9200);">2025-06</div>
<div style="position:absolute;white-space:nowrap;font-family:'Liberation Sans', sans-serif;font-size:16.42px;line-height:16.42px;font-weight:400;color:#111111;top:609.00px;-webkit-text-stroke:0.20px #111111;left:419.37px;transform-origin:0 0;transform:scaleX(0.9200);">$10,148.00</div>
<div style="position:absolute;white-space:nowrap;font-family:'Liberation Sans', sans-serif;font-size:16.42px;line-height:16.42px;font-weight:400;color:#111111;top:631.64px;-webkit-text-stroke:0.20px #111111;left:30.00px;transform-origin:0 0;transform:scaleX(0.9200);">2025-07</div>
<div style="position:absolute;white-space:nowrap;font-family:'Liberation Sans', sans-serif;font-size:16.42px;line-height:16.42px;font-weight:400;color:#111111;top:631.64px;-webkit-text-stroke:0.20px #111111;left:419.37px;transform-origin:0 0;transform:scaleX(0.9200);">$29,391.45</div>
<div style="position:absolute;white-space:nowrap;font-family:'Liberation Sans', sans-serif;font-size:16.42px;line-height:16.42px;font-weight:400;color:#111111;top:654.28px;-webkit-text-stroke:0.20px #111111;left:30.00px;transform-origin:0 0;transform:scaleX(0.9200);">2025-09</div>
<div style="position:absolute;white-space:nowrap;font-family:'Liberation Sans', sans-serif;font-size:16.42px;line-height:16.42px;font-weight:400;color:#111111;top:654.28px;-webkit-text-stroke:0.20px #111111;left:427.76px;transform-origin:0 0;transform:scaleX(0.9200);">$3,385.38</div>
<div style="position:absolute;white-space:nowrap;font-family:'Liberation Sans', sans-serif;font-size:16.42px;line-height:16.42px;font-weight:400;color:#111111;top:676.92px;-webkit-text-stroke:0.20px #111111;left:30.00px;transform-origin:0 0;transform:scaleX(0.9200);">2025-11</div>
<div style="position:absolute;white-space:nowrap;font-family:'Liberation Sans', sans-serif;font-size:16.42px;line-height:16.42px;font-weight:400;color:#111111;top:676.92px;-webkit-text-stroke:0.20px #111111;left:419.37px;transform-origin:0 0;transform:scaleX(0.9200);">$28,790.45</div>
<div style="position:absolute;white-space:nowrap;font-family:'Liberation Sans', sans-serif;font-size:16.42px;line-height:16.42px;font-weight:400;color:#111111;top:541.08px;-webkit-text-stroke:0.20px #111111;left:594.00px;transform-origin:0 0;transform:scaleX(0.9200);">East</div>
<div style="position:absolute;white-space:nowrap;font-family:'Liberation Sans', sans-serif;font-size:16.42px;line-height:16.42px;font-weight:400;color:#111111;top:541.08px;-webkit-text-stroke:0.20px #111111;left:746.37px;transform-origin:0 0;transform:scaleX(0.9200);">$36,850.65</div>
<div style="position:absolute;white-space:nowrap;font-family:'Liberation Sans', sans-serif;font-size:16.42px;line-height:16.42px;font-weight:400;color:#111111;top:563.72px;-webkit-text-stroke:0.20px #111111;left:594.00px;transform-origin:0 0;transform:scaleX(0.9200);">South</div>
<div style="position:absolute;white-space:nowrap;font-family:'Liberation Sans', sans-serif;font-size:16.42px;line-height:16.42px;font-weight:400;color:#111111;top:563.72px;-webkit-text-stroke:0.20px #111111;left:746.37px;transform-origin:0 0;transform:scaleX(0.9200);">$57,637.88</div>
<div style="position:absolute;white-space:nowrap;font-family:'Liberation Sans', sans-serif;font-size:16.42px;line-height:16.42px;font-weight:400;color:#111111;top:586.36px;-webkit-text-stroke:0.20px #111111;left:594.00px;transform-origin:0 0;transform:scaleX(0.9200);">West</div>
<div style="position:absolute;white-space:nowrap;font-family:'Liberation Sans', sans-serif;font-size:16.42px;line-height:16.42px;font-weight:400;color:#111111;top:586.36px;-webkit-text-stroke:0.20px #111111;left:746.37px;transform-origin:0 0;transform:scaleX(0.9200);">$25,123.65</div>
<div style="position:absolute;white-space:nowrap;font-family:'Liberation Sans', sans-serif;font-size:16.42px;line-height:16.42px;font-weight:400;color:#111111;top:609.00px;-webkit-text-stroke:0.20px #111111;left:594.00px;transform-origin:0 0;transform:scaleX(0.9200);">Central</div>
<div style="position:absolute;white-space:nowrap;font-family:'Liberation Sans', sans-serif;font-size:16.42px;line-height:16.42px;font-weight:400;color:#111111;top:609.00px;-webkit-text-stroke:0.20px #111111;left:746.37px;transform-origin:0 0;transform:scaleX(0.9200);">$69,599.90</div>
<div style="position:absolute;white-space:nowrap;font-family:'Liberation Sans', sans-serif;font-size:16.42px;line-height:16.42px;font-weight:400;color:#111111;top:541.08px;-webkit-text-stroke:0.20px #111111;left:921.00px;transform-origin:0 0;transform:scaleX(0.9200);">Electronics</div>
<div style="position:absolute;white-space:nowrap;font-family:'Liberation Sans', sans-serif;font-size:16.42px;line-height:16.42px;font-weight:400;color:#111111;top:541.08px;-webkit-text-stroke:0.20px #111111;left:1079.95px;transform-origin:0 0;transform:scaleX(0.9200);">$103,856.88</div>
<div style="position:absolute;white-space:nowrap;font-family:'Liberation Sans', sans-serif;font-size:16.42px;line-height:16.42px;font-weight:400;color:#111111;top:563.72px;-webkit-text-stroke:0.20px #111111;left:921.00px;transform-origin:0 0;transform:scaleX(0.9200);">Furniture</div>
<div style="position:absolute;white-space:nowrap;font-family:'Liberation Sans', sans-serif;font-size:16.42px;line-height:16.42px;font-weight:400;color:#111111;top:563.72px;-webkit-text-stroke:0.20px #111111;left:1088.37px;transform-origin:0 0;transform:scaleX(0.9200);">$75,218.75</div>
<div style="position:absolute;white-space:nowrap;font-family:'Liberation Sans', sans-serif;font-size:16.42px;line-height:16.42px;font-weight:400;color:#111111;top:586.36px;-webkit-text-stroke:0.20px #111111;left:921.00px;transform-origin:0 0;transform:scaleX(0.9200);">Office Supplies</div>
<div style="position:absolute;white-space:nowrap;font-family:'Liberation Sans', sans-serif;font-size:16.42px;line-height:16.42px;font-weight:400;color:#111111;top:586.36px;-webkit-text-stroke:0.20px #111111;left:1088.37px;transform-origin:0 0;transform:scaleX(0.9200);">$10,136.45</div>
<div style="position:absolute;white-space:nowrap;font-family:'Liberation Sans', sans-serif;font-size:16.42px;line-height:16.42px;font-weight:400;color:#111111;top:541.08px;-webkit-text-stroke:0.20px #111111;left:1264.00px;transform-origin:0 0;transform:scaleX(0.9200);">Liam Johnson</div>
<div style="position:absolute;white-space:nowrap;font-family:'Liberation Sans', sans-serif;font-size:16.42px;line-height:16.42px;font-weight:400;color:#111111;top:541.08px;-webkit-text-stroke:0.20px #111111;left:1388.76px;transform-origin:0 0;transform:scaleX(0.9200);">$7,615.88</div>
<div style="position:absolute;white-space:nowrap;font-family:'Liberation Sans', sans-serif;font-size:16.42px;line-height:16.42px;font-weight:400;color:#111111;top:563.72px;-webkit-text-stroke:0.20px #111111;left:1264.00px;transform-origin:0 0;transform:scaleX(0.9200);">Ava Patel</div>
<div style="position:absolute;white-space:nowrap;font-family:'Liberation Sans', sans-serif;font-size:16.42px;line-height:16.42px;font-weight:400;color:#111111;top:563.72px;-webkit-text-stroke:0.20px #111111;left:1380.37px;transform-origin:0 0;transform:scaleX(0.9200);">$28,330.75</div>
<div style="position:absolute;white-space:nowrap;font-family:'Liberation Sans', sans-serif;font-size:16.42px;line-height:16.42px;font-weight:400;color:#111111;top:586.36px;-webkit-text-stroke:0.20px #111111;left:1264.00px;transform-origin:0 0;transform:scaleX(0.9200);">Ethan Davis</div>
<div style="position:absolute;white-space:nowrap;font-family:'Liberation Sans', sans-serif;font-size:16.42px;line-height:16.42px;font-weight:400;color:#111111;top:586.36px;-webkit-text-stroke:0.20px #111111;left:1380.37px;transform-origin:0 0;transform:scaleX(0.9200);">$51,595.95</div>
<div style="position:absolute;white-space:nowrap;font-family:'Liberation Sans', sans-serif;font-size:16.42px;line-height:16.42px;font-weight:400;color:#111111;top:609.00px;-webkit-text-stroke:0.20px #111111;left:1264.00px;transform-origin:0 0;transform:scaleX(0.9200);">Noah Smith</div>
<div style="position:absolute;white-space:nowrap;font-family:'Liberation Sans', sans-serif;font-size:16.42px;line-height:16.42px;font-weight:400;color:#111111;top:609.00px;-webkit-text-stroke:0.20px #111111;left:1380.37px;transform-origin:0 0;transform:scaleX(0.9200);">$10,012.38</div>
<div style="position:absolute;white-space:nowrap;font-family:'Liberation Sans', sans-serif;font-size:16.42px;line-height:16.42px;font-weight:400;color:#111111;top:631.64px;-webkit-text-stroke:0.20px #111111;left:1264.00px;transform-origin:0 0;transform:scaleX(0.9200);">Mason Lee</div>
<div style="position:absolute;white-space:nowrap;font-family:'Liberation Sans', sans-serif;font-size:16.42px;line-height:16.42px;font-weight:400;color:#111111;top:631.64px;-webkit-text-stroke:0.20px #111111;left:1380.37px;transform-origin:0 0;transform:scaleX(0.9200);">$29,234.77</div>
<svg style="position:absolute;left:27.00px;top:710.00px;" width="890.00" height="318.00" viewBox="0 0 890.00 318.00"><rect x="0.5" y="0.5" width="889" height="316" fill="#fff" stroke="#d9d9d9" stroke-width="1"/></svg>
<div style="position:absolute;left:105.00px;top:978.00px;width:797.00px;height:1.00px;background:#d9d9d9;"></div>
<div style="position:absolute;white-space:nowrap;font-family:'Liberation Sans', sans-serif;font-size:11.63px;line-height:11.63px;font-weight:400;color:#595959;top:972.27px;left:63.85px;transform-origin:0 0;transform:scaleX(0.9950);">$0.00</div>
<div style="position:absolute;left:105.00px;top:942.00px;width:797.00px;height:1.00px;background:#d9d9d9;"></div>
<div style="position:absolute;white-space:nowrap;font-family:'Liberation Sans', sans-serif;font-size:11.63px;line-height:11.63px;font-weight:400;color:#595959;top:936.22px;left:34.89px;transform-origin:0 0;transform:scaleX(0.9950);">$10,000.00</div>
<div style="position:absolute;left:105.00px;top:906.00px;width:797.00px;height:1.00px;background:#d9d9d9;"></div>
<div style="position:absolute;white-space:nowrap;font-family:'Liberation Sans', sans-serif;font-size:11.63px;line-height:11.63px;font-weight:400;color:#595959;top:900.17px;left:34.89px;transform-origin:0 0;transform:scaleX(0.9950);">$20,000.00</div>
<div style="position:absolute;left:105.00px;top:870.00px;width:797.00px;height:1.00px;background:#d9d9d9;"></div>
<div style="position:absolute;white-space:nowrap;font-family:'Liberation Sans', sans-serif;font-size:11.63px;line-height:11.63px;font-weight:400;color:#595959;top:864.12px;left:34.89px;transform-origin:0 0;transform:scaleX(0.9950);">$30,000.00</div>
<div style="position:absolute;left:105.00px;top:834.00px;width:797.00px;height:1.00px;background:#d9d9d9;"></div>
<div style="position:absolute;white-space:nowrap;font-family:'Liberation Sans', sans-serif;font-size:11.63px;line-height:11.63px;font-weight:400;color:#595959;top:828.07px;left:34.89px;transform-origin:0 0;transform:scaleX(0.9950);">$40,000.00</div>
<div style="position:absolute;left:105.00px;top:798.00px;width:797.00px;height:1.00px;background:#d9d9d9;"></div>
<div style="position:absolute;white-space:nowrap;font-family:'Liberation Sans', sans-serif;font-size:11.63px;line-height:11.63px;font-weight:400;color:#595959;top:792.02px;left:34.89px;transform-origin:0 0;transform:scaleX(0.9950);">$50,000.00</div>
<div style="position:absolute;left:105.00px;top:762.00px;width:797.00px;height:1.00px;background:#d9d9d9;"></div>
<div style="position:absolute;white-space:nowrap;font-family:'Liberation Sans', sans-serif;font-size:11.63px;line-height:11.63px;font-weight:400;color:#595959;top:755.97px;left:34.89px;transform-origin:0 0;transform:scaleX(0.9950);">$60,000.00</div>
<div style="position:absolute;left:119.00px;top:909.39px;width:13.00px;height:69.31px;background:#175e83;"></div>
<div style="position:absolute;white-space:nowrap;font-family:'Liberation Sans', sans-serif;font-size:13.37px;line-height:13.37px;font-weight:400;color:#595959;top:988.68px;left:109.91px;transform-origin:0 0;transform:scaleX(0.9700);">2025-</div>
<div style="position:absolute;white-space:nowrap;font-family:'Liberation Sans', sans-serif;font-size:13.37px;line-height:13.37px;font-weight:400;color:#595959;top:1003.98px;left:118.28px;transform-origin:0 0;transform:scaleX(0.9700);">01</div>
<div style="position:absolute;left:161.00px;top:919.53px;width:13.00px;height:59.17px;background:#175e83;"></div>
<div style="position:absolute;white-space:nowrap;font-family:'Liberation Sans', sans-serif;font-size:13.37px;line-height:13.37px;font-weight:400;color:#595959;top:988.68px;left:151.91px;transform-origin:0 0;transform:scaleX(0.9700);">2025-</div>
<div style="position:absolute;white-space:nowrap;font-family:'Liberation Sans', sans-serif;font-size:13.37px;line-height:13.37px;font-weight:400;color:#595959;top:1003.98px;left:160.28px;transform-origin:0 0;transform:scaleX(0.9700);">03</div>
<div style="position:absolute;left:203.00px;top:783.05px;width:13.00px;height:195.65px;background:#175e83;"></div>
<div style="position:absolute;white-space:nowrap;font-family:'Liberation Sans', sans-serif;font-size:13.37px;line-height:13.37px;font-weight:400;color:#595959;top:988.68px;left:193.91px;transform-origin:0 0;transform:scaleX(0.9700);">2025-</div>
<div style="position:absolute;white-space:nowrap;font-family:'Liberation Sans', sans-serif;font-size:13.37px;line-height:13.37px;font-weight:400;color:#595959;top:1003.98px;left:202.28px;transform-origin:0 0;transform:scaleX(0.9700);">05</div>
<div style="position:absolute;left:245.00px;top:942.12px;width:13.00px;height:36.58px;background:#175e83;"></div>
<div style="position:absolute;white-space:nowrap;font-family:'Liberation Sans', sans-serif;font-size:13.37px;line-height:13.37px;font-weight:400;color:#595959;top:988.68px;left:235.91px;transform-origin:0 0;transform:scaleX(0.9700);">2025-</div>
<div style="position:absolute;white-space:nowrap;font-family:'Liberation Sans', sans-serif;font-size:13.37px;line-height:13.37px;font-weight:400;color:#595959;top:1003.98px;left:244.28px;transform-origin:0 0;transform:scaleX(0.9700);">06</div>
<div style="position:absolute;left:287.00px;top:872.74px;width:13.00px;height:105.96px;background:#175e83;"></div>
<div style="position:absolute;white-space:nowrap;font-family:'Liberation Sans', sans-serif;font-size:13.37px;line-height:13.37px;font-weight:400;color:#595959;top:988.68px;left:277.91px;transform-origin:0 0;transform:scaleX(0.9700);">2025-</div>
<div style="position:absolute;white-space:nowrap;font-family:'Liberation Sans', sans-serif;font-size:13.37px;line-height:13.37px;font-weight:400;color:#595959;top:1003.98px;left:286.28px;transform-origin:0 0;transform:scaleX(0.9700);">07</div>
<div style="position:absolute;left:329.00px;top:966.50px;width:13.00px;height:12.20px;background:#175e83;"></div>
<div style="position:absolute;white-space:nowrap;font-family:'Liberation Sans', sans-serif;font-size:13.37px;line-height:13.37px;font-weight:400;color:#595959;top:988.68px;left:319.91px;transform-origin:0 0;transform:scaleX(0.9700);">2025-</div>
<div style="position:absolute;white-space:nowrap;font-family:'Liberation Sans', sans-serif;font-size:13.37px;line-height:13.37px;font-weight:400;color:#595959;top:1003.98px;left:328.28px;transform-origin:0 0;transform:scaleX(0.9700);">09</div>
<div style="position:absolute;left:371.00px;top:874.91px;width:13.00px;height:103.79px;background:#175e83;"></div>
<div style="position:absolute;white-space:nowrap;font-family:'Liberation Sans', sans-serif;font-size:13.37px;line-height:13.37px;font-weight:400;color:#595959;top:988.68px;left:361.91px;transform-origin:0 0;transform:scaleX(0.9700);">2025-</div>
<div style="position:absolute;white-space:nowrap;font-family:'Liberation Sans', sans-serif;font-size:13.37px;line-height:13.37px;font-weight:400;color:#595959;top:1003.98px;left:370.77px;transform-origin:0 0;transform:scaleX(0.9700);">11</div>
<div style="position:absolute;white-space:nowrap;font-family:'Liberation Sans', sans-serif;font-size:19.19px;line-height:19.19px;font-weight:400;color:#595959;top:723.84px;left:404.00px;transform-origin:0 0;transform:scaleX(0.8974);">Monthly Revenue</div>
<svg style="position:absolute;left:927.00px;top:710.00px;" width="543.00" height="205.00" viewBox="0 0 543.00 205.00"><rect x="0.5" y="0.5" width="542" height="204" fill="#fff" stroke="#d9d9d9" stroke-width="1"/></svg>
<div style="position:absolute;left:985.00px;top:763.00px;width:1.00px;height:118.50px;background:#d9d9d9;"></div>
<div style="position:absolute;white-space:nowrap;font-family:'Liberation Sans', sans-serif;font-size:12.50px;line-height:12.50px;font-weight:400;color:#595959;top:890.83px;left:971.35px;transform-origin:0 0;transform:scaleX(0.9300);">$0.00</div>
<div style="position:absolute;left:1040.00px;top:763.00px;width:1.00px;height:118.50px;background:#d9d9d9;"></div>
<div style="position:absolute;white-space:nowrap;font-family:'Liberation Sans', sans-serif;font-size:12.50px;line-height:12.50px;font-weight:400;color:#595959;top:890.83px;left:1011.67px;transform-origin:0 0;transform:scaleX(0.9300);">$10,000.00</div>
<div style="position:absolute;left:1095.00px;top:763.00px;width:1.00px;height:118.50px;background:#d9d9d9;"></div>
<div style="position:absolute;white-space:nowrap;font-family:'Liberation Sans', sans-serif;font-size:12.50px;line-height:12.50px;font-weight:400;color:#595959;top:890.83px;left:1066.53px;transform-origin:0 0;transform:scaleX(0.9300);">$20,000.00</div>
<div style="position:absolute;left:1150.00px;top:763.00px;width:1.00px;height:118.50px;background:#d9d9d9;"></div>
<div style="position:absolute;white-space:nowrap;font-family:'Liberation Sans', sans-serif;font-size:12.50px;line-height:12.50px;font-weight:400;color:#595959;top:890.83px;left:1121.39px;transform-origin:0 0;transform:scaleX(0.9300);">$30,000.00</div>
<div style="position:absolute;left:1205.00px;top:763.00px;width:1.00px;height:118.50px;background:#d9d9d9;"></div>
<div style="position:absolute;white-space:nowrap;font-family:'Liberation Sans', sans-serif;font-size:12.50px;line-height:12.50px;font-weight:400;color:#595959;top:890.83px;left:1176.25px;transform-origin:0 0;transform:scaleX(0.9300);">$40,000.00</div>
<div style="position:absolute;left:1260.00px;top:763.00px;width:1.00px;height:118.50px;background:#d9d9d9;"></div>
<div style="position:absolute;white-space:nowrap;font-family:'Liberation Sans', sans-serif;font-size:12.50px;line-height:12.50px;font-weight:400;color:#595959;top:890.83px;left:1231.11px;transform-origin:0 0;transform:scaleX(0.9300);">$50,000.00</div>
<div style="position:absolute;left:1315.00px;top:763.00px;width:1.00px;height:118.50px;background:#d9d9d9;"></div>
<div style="position:absolute;white-space:nowrap;font-family:'Liberation Sans', sans-serif;font-size:12.50px;line-height:12.50px;font-weight:400;color:#595959;top:890.83px;left:1285.97px;transform-origin:0 0;transform:scaleX(0.9300);">$60,000.00</div>
<div style="position:absolute;left:1369.00px;top:763.00px;width:1.00px;height:118.50px;background:#d9d9d9;"></div>
<div style="position:absolute;white-space:nowrap;font-family:'Liberation Sans', sans-serif;font-size:12.50px;line-height:12.50px;font-weight:400;color:#595959;top:890.83px;left:1340.83px;transform-origin:0 0;transform:scaleX(0.9300);">$70,000.00</div>
<div style="position:absolute;left:1424.00px;top:763.00px;width:1.00px;height:118.50px;background:#d9d9d9;"></div>
<div style="position:absolute;white-space:nowrap;font-family:'Liberation Sans', sans-serif;font-size:12.50px;line-height:12.50px;font-weight:400;color:#595959;top:890.83px;left:1395.69px;transform-origin:0 0;transform:scaleX(0.9300);">$80,000.00</div>
<div style="position:absolute;left:986.50px;top:794.70px;width:381.83px;height:8.00px;background:#175e83;"></div>
<div style="position:absolute;white-space:nowrap;font-family:'Liberation Sans', sans-serif;font-size:12.79px;line-height:12.79px;font-weight:400;color:#595959;top:791.48px;left:933.69px;transform-origin:0 0;transform:scaleX(0.9700);">Central</div>
<div style="position:absolute;left:986.50px;top:818.30px;width:137.83px;height:8.00px;background:#175e83;"></div>
<div style="position:absolute;white-space:nowrap;font-family:'Liberation Sans', sans-serif;font-size:12.79px;line-height:12.79px;font-weight:400;color:#595959;top:815.08px;left:945.66px;transform-origin:0 0;transform:scaleX(0.9700);">West</div>
<div style="position:absolute;left:986.50px;top:842.00px;width:316.20px;height:8.00px;background:#175e83;"></div>
<div style="position:absolute;white-space:nowrap;font-family:'Liberation Sans', sans-serif;font-size:12.79px;line-height:12.79px;font-weight:400;color:#595959;top:838.78px;left:941.29px;transform-origin:0 0;transform:scaleX(0.9700);">South</div>
<div style="position:absolute;left:986.50px;top:865.30px;width:202.16px;height:8.00px;background:#175e83;"></div>
<div style="position:absolute;white-space:nowrap;font-family:'Liberation Sans', sans-serif;font-size:12.79px;line-height:12.79px;font-weight:400;color:#595959;top:862.08px;left:948.89px;transform-origin:0 0;transform:scaleX(0.9700);">East</div>
<div style="position:absolute;white-space:nowrap;font-family:'Liberation Sans', sans-serif;font-size:19.19px;line-height:19.19px;font-weight:400;color:#595959;top:723.84px;left:1124.40px;transform-origin:0 0;transform:scaleX(0.8698);">Revenue by Region</div>
<svg style="position:absolute;left:917.00px;top:1034.00px;" width="544.00" height="40.00" viewBox="0 0 544.00 40.00"><rect x="0.5" y="0.5" width="543" height="60" fill="#fff" stroke="#d9d9d9" stroke-width="1"/></svg>
<div style="position:absolute;white-space:nowrap;font-family:'Liberation Sans', sans-serif;font-size:19.19px;line-height:19.19px;font-weight:400;color:#595959;top:1048.64px;left:1137.20px;transform-origin:0 0;transform:scaleX(0.8991);">Category Mix</div>
<svg style="position:absolute;left:11.00px;top:14.00px;" width="20.00" height="20.00" viewBox="0 0 20.00 20.00"><circle cx="10" cy="10" r="9.6" fill="#fe5f57" stroke="#e0443e" stroke-width="0.6"/><circle cx="10" cy="10" r="2.8" fill="#8c1a12" opacity="0.8"/></svg>
<svg style="position:absolute;left:44.00px;top:14.00px;" width="20.00" height="20.00" viewBox="0 0 20.00 20.00"><circle cx="10" cy="10" r="9.6" fill="#f8c01f"/></svg>
<svg style="position:absolute;left:76.50px;top:14.00px;" width="20.00" height="20.00" viewBox="0 0 20.00 20.00"><circle cx="10" cy="10" r="9.6" fill="#29c840"/></svg>
<div style="position:absolute;white-space:nowrap;font-family:'Liberation Sans', sans-serif;font-size:15.84px;line-height:15.84px;font-weight:700;color:#e6e6e6;top:16.78px;left:136.50px;transform-origin:0 0;transform:scaleX(0.9647);">AutoSave</div>
<div style="position:absolute;left:221.00px;top:14.00px;width:39.00px;height:20.00px;background:#1c1c1c;border-radius:10px;"></div>
<svg style="position:absolute;left:220.00px;top:13.00px;" width="22.00" height="22.00" viewBox="0 0 22.00 22.00"><circle cx="10.5" cy="11" r="9" fill="#fafafa"/></svg>
<svg style="position:absolute;left:277.00px;top:11.00px;" width="24.00" height="25.00" viewBox="0 0 24.00 25.00"><path d="M3 11 L12 2.5 L21 11 V23 H15 V16.5 Q12 13.5 9 16.5 V23 H3 Z" fill="none" stroke="#f2f2f2" stroke-width="1.7" stroke-linejoin="round" stroke-linecap="round"/></svg>
<svg style="position:absolute;left:315.00px;top:12.00px;" width="24.00" height="24.00" viewBox="0 0 24.00 24.00"><path d="M3 4.5 Q3 2.5 5 2.5 H17 L21.5 7 V19.5 Q21.5 21.5 19.5 21.5 H5 Q3 21.5 3 19.5 Z" fill="none" stroke="#f2f2f2" stroke-width="1.7" stroke-linejoin="round" stroke-linecap="round"/><path d="M8 2.5 V7.5 H15.5 V2.5" fill="none" stroke="#f2f2f2" stroke-width="1.7" stroke-linejoin="round" stroke-linecap="round"/><path d="M7 21.5 V13.5 H17.5 V21.5" fill="none" stroke="#f2f2f2" stroke-width="1.7" stroke-linejoin="round" stroke-linecap="round"/></svg>
<svg style="position:absolute;left:353.00px;top:12.00px;" width="26.00" height="26.00" viewBox="0 0 26.00 26.00"><path d="M12 21.5 H5 Q3 21.5 3 19.5 V4.5 Q3 2.5 5 2.5 H17 L21.5 7 V11" fill="none" stroke="#f2f2f2" stroke-width="1.7" stroke-linejoin="round" stroke-linecap="round"/><path d="M8 2.5 V7.5 H15.5 V2.5" fill="none" stroke="#f2f2f2" stroke-width="1.7" stroke-linejoin="round" stroke-linecap="round"/><path d="M7 21.5 V13.5 H14" fill="none" stroke="#f2f2f2" stroke-width="1.7" stroke-linejoin="round" stroke-linecap="round"/><path d="M14 23 L22 15 Q23.5 13.5 24.5 15 Q25.5 16.5 24 17.5 L16 24.5 L13.5 25 Z" fill="#f2f2f2"/></svg>
<svg style="position:absolute;left:393.00px;top:11.00px;" width="23.00" height="26.00" viewBox="0 0 23.00 26.00"><path d="M3 3 V9 H9" fill="none" stroke="#8a8a8a" stroke-width="1.7" stroke-linecap="round" stroke-linejoin="round"/><path d="M3 9 Q9 1.5 15.5 4 Q21 7 18.5 13 L6 24" fill="none" stroke="#8a8a8a" stroke-width="1.7" stroke-linecap="round" stroke-linejoin="round"/></svg>
<svg style="position:absolute;left:424.50px;top:20.50px;" width="11.00" height="7.00" viewBox="0 0 11.00 7.00"><polyline points="1,1 5.5,6.0 10.0,1" fill="none" stroke="#8a8a8a" stroke-width="1.5" stroke-linecap="round" stroke-linejoin="round"/></svg>
<svg style="position:absolute;left:448.00px;top:12.00px;" width="24.00" height="24.00" viewBox="0 0 24.00 24.00"><path d="M19 7 A9 9 0 1 0 21 13" fill="none" stroke="#8a8a8a" stroke-width="1.7" stroke-linecap="round" stroke-linejoin="round"/><path d="M19.5 2 V7.5 H14" fill="none" stroke="#8a8a8a" stroke-width="1.7" stroke-linecap="round" stroke-linejoin="round"/></svg>
<svg style="position:absolute;left:487.00px;top:20.00px;" width="22.00" height="8.00" viewBox="0 0 22.00 8.00"><circle cx="3" cy="4" r="2.3" fill="#f0f0f0"/><circle cx="11" cy="4" r="2.3" fill="#f0f0f0"/><circle cx="19" cy="4" r="2.3" fill="#f0f0f0"/></svg>
<svg style="position:absolute;left:907.00px;top:14.00px;" width="25.00" height="23.00" viewBox="0 0 25.00 23.00"><rect x="3" y="1.5" width="20" height="17.5" rx="3" fill="#f6f6f6"/><rect x="9" y="5" width="9" height="11" fill="#9fd3a8"/><rect x="10" y="3.5" width="7" height="3" fill="#7cc48a"/><rect x="1.5" y="11.5" width="10" height="10" rx="1.5" fill="#3d9b5a"/><path d="M4 14 L9 19 M9 14 L4 19" stroke="#fff" stroke-width="1.5"/></svg>
<div style="position:absolute;white-space:nowrap;font-family:'Liberation Sans', sans-serif;font-size:18.31px;line-height:18.31px;font-weight:400;color:#f2f2f2;top:15.13px;-webkit-text-stroke:0.30px #f2f2f2;left:936.20px;transform-origin:0 0;transform:scaleX(0.9413);">GPT Plugin Demo</div>
<svg style="position:absolute;left:1079.10px;top:20.45px;" width="13.00" height="7.50" viewBox="0 0 13.00 7.50"><polyline points="1,1 6.5,6.5 12.0,1" fill="none" stroke="#8a8a8a" stroke-width="1.6" stroke-linecap="round" stroke-linejoin="round"/></svg>
<svg style="position:absolute;left:1607.00px;top:15.00px;" width="22.00" height="22.00" viewBox="0 0 22.00 22.00"><circle cx="8.5" cy="8.5" r="6.3" fill="none" stroke="#9a9a9a" stroke-width="1.8"/><path d="M13 13 L19 19" stroke="#9a9a9a" stroke-width="2" stroke-linecap="round"/></svg>
<div style="position:absolute;white-space:nowrap;font-family:'Liberation Sans', sans-serif;font-size:18.02px;line-height:18.02px;font-weight:700;color:#9a9a9a;top:17.93px;left:1633.00px;transform-origin:0 0;transform:scaleX(0.9752);">Search (Cmd + Ctrl + U)</div>
<div style="position:absolute;left:1703.20px;top:46.70px;width:147.80px;height:33.70px;background:#4f4f4f;border-radius:8px;"></div>
<svg style="position:absolute;left:1715.00px;top:52.00px;" width="27.00" height="26.00" viewBox="0 0 27.00 26.00"><path d="M4 3 H21 Q24 3 24 6 V15.5 Q24 18.5 21 18.5 H11 L6.5 22.5 V18.5 H4 Q1.5 18.5 1.5 15.5 V6 Q1.5 3 4 3 Z" fill="none" stroke="#f0f0f0" stroke-width="1.7" stroke-linejoin="round"/></svg>
<div style="position:absolute;white-space:nowrap;font-family:'Liberation Sans', sans-serif;font-size:17.88px;line-height:17.88px;font-weight:400;color:#f2f2f2;top:55.55px;-webkit-text-stroke:0.30px #f2f2f2;left:1747.90px;transform-origin:0 0;transform:scaleX(1.0504);">Comments</div>
<div style="position:absolute;left:1865.70px;top:46.70px;width:125.50px;height:33.70px;background:#138a3e;border-radius:8px;"></div>
<svg style="position:absolute;left:1879.00px;top:51.00px;" width="27.00" height="27.00" viewBox="0 0 27.00 27.00"><path d="M10 5 H5.5 Q3 5 3 7.5 V21.5 Q3 24 5.5 24 H19.5 Q22 24 22 21.5 V18" fill="none" stroke="#fff" stroke-width="1.7" stroke-linecap="round"/><path d="M8.5 19 Q9 10.5 18 10 V14.5 L25 8 L18 2 V6 Q8 7 8.5 19 Z" fill="none" stroke="#fff" stroke-width="1.7" stroke-linejoin="round"/></svg>
<div style="position:absolute;white-space:nowrap;font-family:'Liberation Sans', sans-serif;font-size:17.88px;line-height:17.88px;font-weight:700;color:#ffffff;top:55.55px;left:1909.80px;transform-origin:0 0;transform:scaleX(0.9698);">Share</div>
<svg style="position:absolute;left:1969.30px;top:61.00px;" width="13.00" height="8.00" viewBox="0 0 13.00 8.00"><polyline points="1,1 6.5,7.0 12.0,1" fill="none" stroke="#ffffff" stroke-width="1.7" stroke-linecap="round" stroke-linejoin="round"/></svg>
<div style="position:absolute;white-space:nowrap;font-family:'Liberation Sans', sans-serif;font-size:19.33px;line-height:19.33px;font-weight:700;color:#ececec;top:51.92px;left:10.50px;transform-origin:0 0;transform:scaleX(0.9778);">Home</div>
<div style="position:absolute;white-space:nowrap;font-family:'Liberation Sans', sans-serif;font-size:19.33px;line-height:19.33px;font-weight:700;color:#e8e8e8;top:51.92px;left:96.60px;transform-origin:0 0;transform:scaleX(0.9519);">Insert</div>
<div style="position:absolute;white-space:nowrap;font-family:'Liberation Sans', sans-serif;font-size:19.33px;line-height:19.33px;font-weight:700;color:#e8e8e8;top:51.92px;left:183.40px;transform-origin:0 0;transform:scaleX(0.9173);">Draw</div>
<div style="position:absolute;white-space:nowrap;font-family:'Liberation Sans', sans-serif;font-size:19.33px;line-height:19.33px;font-weight:700;color:#e8e8e8;top:51.92px;left:262.50px;transform-origin:0 0;transform:scaleX(0.9310);">Page Layout</div>
<div style="position:absolute;white-space:nowrap;font-family:'Liberation Sans', sans-serif;font-size:19.33px;line-height:19.33px;font-weight:700;color:#e8e8e8;top:51.92px;left:406.50px;transform-origin:0 0;transform:scaleX(0.9254);">Formulas</div>
<div style="position:absolute;white-space:nowrap;font-family:'Liberation Sans', sans-serif;font-size:19.33px;line-height:19.33px;font-weight:700;color:#e8e8e8;top:51.92px;left:524.00px;transform-origin:0 0;transform:scaleX(0.9513);">Data</div>
<div style="position:absolute;white-space:nowrap;font-family:'Liberation Sans', sans-serif;font-size:19.33px;line-height:19.33px;font-weight:700;color:#e8e8e8;top:51.92px;left:598.00px;transform-origin:0 0;transform:scaleX(0.9303);">Review</div>
<div style="position:absolute;white-space:nowrap;font-family:'Liberation Sans', sans-serif;font-size:19.33px;line-height:19.33px;font-weight:700;color:#e8e8e8;top:51.92px;left:695.50px;transform-origin:0 0;transform:scaleX(0.9260);">View</div>
<div style="position:absolute;white-space:nowrap;font-family:'Liberation Sans', sans-serif;font-size:19.33px;line-height:19.33px;font-weight:700;color:#e8e8e8;top:51.92px;left:771.50px;transform-origin:0 0;transform:scaleX(0.9477);">Automate</div>
<div style="position:absolute;left:10.00px;top:76.30px;width:53.70px;height:4.70px;background:#e0e0e0;border-radius:3px;"></div>
<svg style="position:absolute;left:0.00px;top:85.00px;" width="70.00" height="60.00" viewBox="0 0 70.00 60.00"><g transform="translate(0,-85)"><path d="M20.5 134 V104 H24" fill="none" stroke="#ee9a48" stroke-width="4.6"/><path d="M20.5 133.6 H35.3" fill="none" stroke="#ee9a48" stroke-width="4.6"/><path d="M18.3 102 V136 H35.3" fill="none" stroke="#f5d020" stroke-width="0.9" stroke-dasharray="1 1"/><path d="M41.8 104 H45.8 V112" fill="none" stroke="#ee9a48" stroke-width="4.4"/><path d="M25.2 107 V101.4 H28.8 Q29 96.8 33.3 96.8 Q37.6 96.8 37.8 101.4 H41.3 V107 Z" fill="#282828" stroke="#a8a8a8" stroke-width="1.9" stroke-linejoin="round"/><rect x="38.1" y="114.2" width="17.7" height="23.5" fill="#282828" stroke="#d0d0d0" stroke-width="2.2"/></g></svg>
<div style="position:absolute;white-space:nowrap;font-family:'Liberation Sans', sans-serif;font-size:15.26px;line-height:15.26px;font-weight:400;color:#ececec;top:145.98px;-webkit-text-stroke:0.45px #ececec;left:23.00px;transform-origin:0 0;transform:scaleX(0.9864);">Paste</div>
<svg style="position:absolute;left:63.50px;top:113.30px;" width="9.00" height="6.40" viewBox="0 0 9.00 6.40"><polyline points="1,1 4.5,5.4 8.0,1" fill="none" stroke="#e6e6e6" stroke-width="2.2" stroke-linecap="round" stroke-linejoin="round"/></svg>
<svg style="position:absolute;left:82.00px;top:90.00px;" width="24.00" height="28.00" viewBox="0 0 24.00 28.00"><g transform="translate(-82,-90)"><path d="M90.3 93.6 L97.9 109.5 M99 93.6 L91.1 109.5" stroke="#d0d0d0" stroke-width="1.1" fill="none"/><circle cx="90.6" cy="113.2" r="2.5" fill="none" stroke="#3da3e8" stroke-width="1.7"/><circle cx="98.8" cy="113.2" r="2.5" fill="none" stroke="#3da3e8" stroke-width="1.7"/></g></svg>
<svg style="position:absolute;left:80.00px;top:120.00px;" width="30.00" height="30.00" viewBox="0 0 30.00 30.00"><g transform="translate(-80,-120)"><path d="M94.5 125.2 H84.3 V144 H92" fill="none" stroke="#d6d6d6" stroke-width="1.4"/><path d="M92.8 129.7 H101 L105.3 134 V146.2 H92.8 Z" fill="none" stroke="#d6d6d6" stroke-width="1.4" stroke-linejoin="round"/><path d="M101 129.7 V134 H105.3" fill="#d6d6d6"/><path d="M96 139.6 H102 M96 142.6 H102" stroke="#d6d6d6" stroke-width="1.1"/></g></svg>
<svg style="position:absolute;left:114.50px;top:132.80px;" width="9.00" height="6.40" viewBox="0 0 9.00 6.40"><polyline points="1,1 4.5,5.4 8.0,1" fill="none" stroke="#e6e6e6" stroke-width="2.2" stroke-linecap="round" stroke-linejoin="round"/></svg>
<svg style="position:absolute;left:80.00px;top:152.00px;" width="30.00" height="28.00" viewBox="0 0 30.00 28.00"><g transform="translate(-80,-152) translate(104.2,156.5) rotate(45)"><rect x="-1.7" y="0" width="3.4" height="8.5" rx="1" fill="none" stroke="#d0d0d0" stroke-width="1.3"/><rect x="-4.6" y="8.5" width="9.2" height="4.8" fill="none" stroke="#d0d0d0" stroke-width="1.3"/><path d="M-4.6 13.3 L-7.6 23 L7.6 23 L4.6 13.3" fill="#282828" stroke="#f0a040" stroke-width="1.2" stroke-dasharray="1.2 0.9"/><path d="M-6 18 L6 18 L7.6 23 L-7.6 23 Z" fill="#ee8e3a"/></g></svg>
<div style="position:absolute;left:141.25px;top:96.00px;width:1.50px;height:87.00px;background:#4a4a4a;"></div>
<div style="position:absolute;left:157.00px;top:96.00px;width:199.00px;height:33.40px;background:#303030;border-radius:6px;border:1px solid #3c3c3c;box-sizing:border-box;"></div>
<div style="position:absolute;white-space:nowrap;font-family:'Liberation Sans', sans-serif;font-size:18.75px;line-height:18.75px;font-weight:400;color:#f4f4f4;top:103.51px;-webkit-text-stroke:0.30px #f4f4f4;left:166.50px;transform-origin:0 0;transform:scaleX(0.9451);">Aptos Narrow (Bod...</div>
<svg style="position:absolute;left:342.00px;top:110.55px;" width="9.00" height="6.40" viewBox="0 0 9.00 6.40"><polyline points="1,1 4.5,5.4 8.0,1" fill="none" stroke="#e6e6e6" stroke-width="2.2" stroke-linecap="round" stroke-linejoin="round"/></svg>
<div style="position:absolute;left:359.40px;top:96.00px;width:76.20px;height:33.40px;background:#303030;border-radius:6px;border:1px solid #3c3c3c;box-sizing:border-box;"></div>
<div style="position:absolute;white-space:nowrap;font-family:'Liberation Sans', sans-serif;font-size:18.90px;line-height:18.90px;font-weight:400;color:#f4f4f4;top:103.39px;-webkit-text-stroke:0.30px #f4f4f4;left:368.00px;transform-origin:0 0;transform:scaleX(0.8373);">12</div>
<svg style="position:absolute;left:420.50px;top:110.55px;" width="9.00" height="6.40" viewBox="0 0 9.00 6.40"><polyline points="1,1 4.5,5.4 8.0,1" fill="none" stroke="#e6e6e6" stroke-width="2.2" stroke-linecap="round" stroke-linejoin="round"/></svg>
<div style="position:absolute;white-space:nowrap;font-family:'Liberation Sans', sans-serif;font-size:25.44px;line-height:25.44px;font-weight:400;color:#d6d6d6;top:99.43px;left:445.60px;transform-origin:0 0;transform:scaleX(0.9070);">A</div>
<svg style="position:absolute;left:458.00px;top:100.00px;" width="12.00" height="8.00" viewBox="0 0 12.00 8.00"><polyline points="2,6 6,2 10,6" fill="none" stroke="#3da3e8" stroke-width="1.7"/></svg>
<div style="position:absolute;white-space:nowrap;font-family:'Liberation Sans', sans-serif;font-size:21.08px;line-height:21.08px;font-weight:400;color:#d6d6d6;top:103.14px;left:484.00px;transform-origin:0 0;transform:scaleX(0.9596);">A</div>
<svg style="position:absolute;left:495.00px;top:101.00px;" width="12.00" height="8.00" viewBox="0 0 12.00 8.00"><polyline points="2,2 6,6 10,2" fill="none" stroke="#3da3e8" stroke-width="1.7"/></svg>
<div style="position:absolute;left:523.85px;top:96.00px;width:1.50px;height:87.70px;background:#4a4a4a;"></div>
<div style="position:absolute;white-space:nowrap;font-family:'Liberation Sans', sans-serif;font-size:19.91px;line-height:19.91px;font-weight:700;color:#d8d8d8;top:147.22px;left:169.50px;transform-origin:0 0;transform:scaleX(0.6603);">B</div>
<div style="position:absolute;white-space:nowrap;font-family:'Liberation Serif', serif;font-size:20.92px;line-height:20.92px;font-weight:400;color:#d8d8d8;top:146.79px;left:205.50px;transform-origin:0 0;transform:scaleX(1.3660);font-style:italic;">I</div>
<div style="position:absolute;white-space:nowrap;font-family:'Liberation Sans', sans-serif;font-size:18.90px;line-height:18.90px;font-weight:400;color:#d8d8d8;top:147.69px;left:240.50px;transform-origin:0 0;transform:scaleX(0.9522);">U</div>
<div style="position:absolute;left:240.00px;top:166.00px;width:13.50px;height:1.60px;background:#d8d8d8;"></div>
<svg style="position:absolute;left:268.50px;top:155.30px;" width="9.00" height="6.40" viewBox="0 0 9.00 6.40"><polyline points="1,1 4.5,5.4 8.0,1" fill="none" stroke="#e6e6e6" stroke-width="2.2" stroke-linecap="round" stroke-linejoin="round"/></svg>
<div style="position:absolute;left:293.05px;top:146.50px;width:1.50px;height:24.10px;background:#444;"></div>
<svg style="position:absolute;left:309.00px;top:146.00px;" width="26.00" height="24.00" viewBox="0 0 26.00 24.00"><path d="M2 2 H22 V21 M2 2 V21 M12 2 V21 M2 11.5 H22" fill="none" stroke="#d0d0d0" stroke-width="1.4" stroke-dasharray="1.5 1.6"/><rect x="1.5" y="20.5" width="21.5" height="2" fill="#e8e8e8"/></svg>
<svg style="position:absolute;left:343.50px;top:155.55px;" width="9.00" height="6.40" viewBox="0 0 9.00 6.40"><polyline points="1,1 4.5,5.4 8.0,1" fill="none" stroke="#e6e6e6" stroke-width="2.2" stroke-linecap="round" stroke-linejoin="round"/></svg>
<div style="position:absolute;left:368.00px;top:146.50px;width:1.50px;height:24.10px;background:#444;"></div>
<svg style="position:absolute;left:385.00px;top:144.00px;" width="26.00" height="28.00" viewBox="0 0 26.00 28.00"><path d="M4.5 13 L12 5 L19 12.5 L12 20 Z" fill="none" stroke="#d6d6d6" stroke-width="1.4" stroke-linejoin="round"/><path d="M10 7 V3 Q10 1.5 11.5 1.5 Q13 1.5 13 3 V9" fill="none" stroke="#d6d6d6" stroke-width="1.3"/><path d="M19 8 Q22 9.5 21.5 14" fill="none" stroke="#4aa8e0" stroke-width="2"/><rect x="1" y="20" width="23" height="6" fill="#f2e600"/></svg>
<svg style="position:absolute;left:418.50px;top:155.30px;" width="9.00" height="6.40" viewBox="0 0 9.00 6.40"><polyline points="1,1 4.5,5.4 8.0,1" fill="none" stroke="#e6e6e6" stroke-width="2.2" stroke-linecap="round" stroke-linejoin="round"/></svg>
<div style="position:absolute;white-space:nowrap;font-family:'Liberation Sans', sans-serif;font-size:21.80px;line-height:21.80px;font-weight:400;color:#d6d6d6;top:144.42px;left:445.00px;transform-origin:0 0;transform:scaleX(0.8933);">A</div>
<div style="position:absolute;left:440.00px;top:164.00px;width:23.00px;height:6.00px;background:#e60000;"></div>
<svg style="position:absolute;left:472.50px;top:155.30px;" width="9.00" height="6.40" viewBox="0 0 9.00 6.40"><polyline points="1,1 4.5,5.4 8.0,1" fill="none" stroke="#e6e6e6" stroke-width="2.2" stroke-linecap="round" stroke-linejoin="round"/></svg>
<div style="position:absolute;left:607.50px;top:90.50px;width:30.50px;height:28.00px;background:linear-gradient(#555,#444);border-radius:5px;"></div>
<svg style="position:absolute;left:540.00px;top:85.00px;" width="100.00" height="70.00" viewBox="0 0 100.00 70.00"><rect x="5.0" y="8.2" width="20.0" height="1.8" fill="#d6d6d6"/><rect x="8.0" y="14.2" width="14.0" height="1.8" fill="#d6d6d6"/><rect x="5.0" y="19.6" width="20.0" height="1.8" fill="#d6d6d6"/></svg>
<svg style="position:absolute;left:540.00px;top:85.00px;" width="100.00" height="70.00" viewBox="0 0 100.00 70.00"><rect x="39.0" y="12.2" width="20.0" height="1.8" fill="#d6d6d6"/><rect x="42.0" y="18.2" width="14.0" height="1.8" fill="#d6d6d6"/><rect x="39.0" y="23.8" width="20.0" height="1.8" fill="#d6d6d6"/></svg>
<svg style="position:absolute;left:540.00px;top:85.00px;" width="100.00" height="70.00" viewBox="0 0 100.00 70.00"><rect x="73.0" y="18.2" width="20.0" height="1.8" fill="#d6d6d6"/><rect x="76.0" y="23.8" width="14.0" height="1.8" fill="#d6d6d6"/><rect x="73.0" y="29.2" width="20.0" height="1.8" fill="#d6d6d6"/></svg>
<svg style="position:absolute;left:540.00px;top:85.00px;" width="100.00" height="70.00" viewBox="0 0 100.00 70.00"><rect x="5.0" y="40.7" width="20.0" height="1.8" fill="#d6d6d6"/><rect x="5.0" y="46.2" width="14.0" height="1.8" fill="#d6d6d6"/><rect x="5.0" y="52.0" width="20.0" height="1.8" fill="#d6d6d6"/><rect x="5.0" y="57.7" width="14.0" height="1.8" fill="#d6d6d6"/></svg>
<svg style="position:absolute;left:540.00px;top:85.00px;" width="100.00" height="70.00" viewBox="0 0 100.00 70.00"><rect x="39.0" y="40.7" width="20.0" height="1.8" fill="#d6d6d6"/><rect x="42.0" y="46.2" width="14.0" height="1.8" fill="#d6d6d6"/><rect x="39.0" y="52.0" width="20.0" height="1.8" fill="#d6d6d6"/><rect x="42.0" y="57.7" width="14.0" height="1.8" fill="#d6d6d6"/></svg>
<svg style="position:absolute;left:540.00px;top:85.00px;" width="100.00" height="70.00" viewBox="0 0 100.00 70.00"><rect x="73.0" y="40.7" width="20.0" height="1.8" fill="#d6d6d6"/><rect x="78.5" y="46.2" width="14.5" height="1.8" fill="#d6d6d6"/><rect x="73.0" y="52.0" width="20.0" height="1.8" fill="#d6d6d6"/><rect x="78.5" y="57.7" width="14.5" height="1.8" fill="#d6d6d6"/></svg>
<svg style="position:absolute;left:543.00px;top:155.00px;" width="26.00" height="22.00" viewBox="0 0 26.00 22.00"><rect x="2" y="1.5" width="20" height="1.8" fill="#d6d6d6"/><rect x="12" y="7.2" width="10" height="1.8" fill="#d6d6d6"/><rect x="12" y="12.6" width="10" height="1.8" fill="#d6d6d6"/><rect x="2" y="18.3" width="20" height="1.8" fill="#d6d6d6"/><path d="M9 10.8 H2.5 M5.5 7.5 L2.3 10.8 L5.5 14" fill="none" stroke="#3da3e8" stroke-width="1.7"/></svg>
<svg style="position:absolute;left:577.00px;top:155.00px;" width="26.00" height="22.00" viewBox="0 0 26.00 22.00"><rect x="2" y="1.5" width="20" height="1.8" fill="#d6d6d6"/><rect x="12" y="7.2" width="10" height="1.8" fill="#d6d6d6"/><rect x="12" y="12.6" width="10" height="1.8" fill="#d6d6d6"/><rect x="2" y="18.3" width="20" height="1.8" fill="#d6d6d6"/><path d="M2 10.8 H8.5 M5.5 7.5 L8.7 10.8 L5.5 14" fill="none" stroke="#3da3e8" stroke-width="1.7"/></svg>
<div style="position:absolute;left:615.75px;top:154.00px;width:1.50px;height:25.00px;background:#444;"></div>
<div style="position:absolute;white-space:nowrap;font-family:'Liberation Sans', sans-serif;font-size:15.26px;line-height:15.26px;font-weight:400;color:#d6d6d6;top:91.98px;left:648.50px;transform-origin:0 0;">ab</div>
<div style="position:absolute;white-space:nowrap;font-family:'Liberation Sans', sans-serif;font-size:10.90px;line-height:10.90px;font-weight:400;color:#d6d6d6;top:105.78px;left:648.50px;transform-origin:0 0;transform:scaleX(1.1925);">c</div>
<svg style="position:absolute;left:654.00px;top:103.00px;" width="16.00" height="14.00" viewBox="0 0 16.00 14.00"><path d="M12.5 1 Q14.5 6.5 9 7.5 H3 M6 4.5 L2.8 7.5 L6 10.5" fill="none" stroke="#3da3e8" stroke-width="1.7"/></svg>
<svg style="position:absolute;left:676.00px;top:101.80px;" width="9.00" height="6.40" viewBox="0 0 9.00 6.40"><polyline points="1,1 4.5,5.4 8.0,1" fill="none" stroke="#e6e6e6" stroke-width="2.2" stroke-linecap="round" stroke-linejoin="round"/></svg>
<svg style="position:absolute;left:643.00px;top:122.00px;" width="26.00" height="26.00" viewBox="0 0 26.00 26.00"><rect x="2" y="2" width="21" height="20.5" fill="none" stroke="#d0d0d0" stroke-width="1.6"/><path d="M12.5 2 V6 M12.5 18.5 V22.5" stroke="#d0d0d0" stroke-width="1.6"/><rect x="2" y="6" width="21" height="12.5" fill="none" stroke="#3da3e8" stroke-width="1.7"/><path d="M5.5 12.3 H19.5 M8 9.8 L5.3 12.3 L8 14.8 M17 9.8 L19.7 12.3 L17 14.8" fill="none" stroke="#3da3e8" stroke-width="1.6"/></svg>
<svg style="position:absolute;left:676.00px;top:132.80px;" width="9.00" height="6.40" viewBox="0 0 9.00 6.40"><polyline points="1,1 4.5,5.4 8.0,1" fill="none" stroke="#e6e6e6" stroke-width="2.2" stroke-linecap="round" stroke-linejoin="round"/></svg>
<svg style="position:absolute;left:630.00px;top:153.00px;" width="30.00" height="26.00" viewBox="0 0 30.00 26.00"><text x="0" y="0" transform="translate(4.5,19) rotate(-45)" font-family="Liberation Sans" font-size="12.5" fill="#d6d6d6">ab</text><path d="M8.5 23 L24.5 7 M18.5 6.8 H24.7 V13" fill="none" stroke="#3da3e8" stroke-width="1.6"/></svg>
<svg style="position:absolute;left:663.50px;top:164.30px;" width="9.00" height="6.40" viewBox="0 0 9.00 6.40"><polyline points="1,1 4.5,5.4 8.0,1" fill="none" stroke="#e6e6e6" stroke-width="2.2" stroke-linecap="round" stroke-linejoin="round"/></svg>
<div style="position:absolute;left:703.25px;top:96.00px;width:1.50px;height:87.50px;background:#4a4a4a;"></div>
<div style="position:absolute;left:719.20px;top:96.40px;width:219.40px;height:33.50px;background:#303030;border-radius:6px;border:1px solid #3c3c3c;box-sizing:border-box;"></div>
<div style="position:absolute;white-space:nowrap;font-family:'Liberation Sans', sans-serif;font-size:18.17px;line-height:18.17px;font-weight:400;color:#f4f4f4;top:104.01px;-webkit-text-stroke:0.30px #f4f4f4;left:728.00px;transform-origin:0 0;transform:scaleX(0.9438);">General</div>
<svg style="position:absolute;left:923.10px;top:110.40px;" width="9.00" height="6.40" viewBox="0 0 9.00 6.40"><polyline points="1,1 4.5,5.4 8.0,1" fill="none" stroke="#e6e6e6" stroke-width="2.2" stroke-linecap="round" stroke-linejoin="round"/></svg>
<div style="position:absolute;white-space:nowrap;font-family:'Liberation Sans', sans-serif;font-size:22.67px;line-height:22.67px;font-weight:400;color:#d8d8d8;top:147.68px;left:730.00px;transform-origin:0 0;transform:scaleX(0.7946);">$</div>
<svg style="position:absolute;left:756.50px;top:155.80px;" width="9.00" height="6.40" viewBox="0 0 9.00 6.40"><polyline points="1,1 4.5,5.4 8.0,1" fill="none" stroke="#ececec" stroke-width="2.2" stroke-linecap="round" stroke-linejoin="round"/></svg>
<div style="position:absolute;white-space:nowrap;font-family:'Liberation Sans', sans-serif;font-size:28.34px;line-height:28.34px;font-weight:400;color:#d8d8d8;top:145.26px;left:778.70px;transform-origin:0 0;transform:scaleX(0.8761);">%</div>
<svg style="position:absolute;left:818.00px;top:146.00px;" width="18.00" height="25.00" viewBox="0 0 18.00 25.00"><circle cx="9" cy="8.5" r="4.5" fill="#d8d8d8"/><path d="M12.8 9 Q14 16 6 21" fill="none" stroke="#d8d8d8" stroke-width="2.6" stroke-linecap="round"/></svg>
<div style="position:absolute;left:854.65px;top:146.00px;width:1.50px;height:25.00px;background:#444;"></div>
<svg style="position:absolute;left:870.00px;top:145.00px;" width="30.00" height="28.00" viewBox="0 0 30.00 28.00"><path d="M15 6.5 H4.5 M8.5 2.5 L4.2 6.5 L8.5 10.5" fill="none" stroke="#3da3e8" stroke-width="1.6"/><text x="17" y="12" font-family="Liberation Sans" font-size="12" fill="#d8d8d8">0</text><text x="8" y="24" font-family="Liberation Sans" font-size="12" fill="#d8d8d8">.00</text></svg>
<svg style="position:absolute;left:906.00px;top:145.00px;" width="30.00" height="28.00" viewBox="0 0 30.00 28.00"><text x="6" y="12" font-family="Liberation Sans" font-size="12" fill="#d8d8d8">.00</text><path d="M3 17.5 H14 M10 13.5 L14.3 17.5 L10 21.5" fill="none" stroke="#3da3e8" stroke-width="1.6"/><text x="18" y="24" font-family="Liberation Sans" font-size="12" fill="#d8d8d8">0</text></svg>
<div style="position:absolute;left:952.55px;top:96.00px;width:1.50px;height:88.00px;background:#4a4a4a;"></div>
<svg style="position:absolute;left:965.00px;top:90.00px;" width="35.00" height="95.00" viewBox="0 0 35.00 95.00"><g transform="translate(-965,-90)"><rect x="972.8" y="95.8" width="21.7" height="18.4" fill="none" stroke="#c8c8c8" stroke-width="1.5"/><path d="M977.5 95.8 V114.2 M985 95.8 V114.2 M989.6 95.8 V114.2 M972.8 101.2 H994.5 M972.8 108.5 H994.5" stroke="#c8c8c8" stroke-width="1.2"/><rect x="977.6" y="95.9" width="7.4" height="5.3" fill="#b8381c" stroke="#f05030" stroke-width="0.8" stroke-dasharray="1 0.8"/><rect x="977.6" y="108.5" width="10" height="5.7" fill="#b8381c" stroke="#f05030" stroke-width="0.8" stroke-dasharray="1 0.8"/><path d="M978.3 101.5 V108.3 M981.2 101.5 V108.3" stroke="#3da3e8" stroke-width="1.3"/><path d="M972.8 146 V127 H994.5 V131 M979.3 127 V146 M987 127 V131 M972.8 131.6 H994.5 M972.8 138.9 H979.3" fill="none" stroke="#c8c8c8" stroke-width="1.3"/><rect x="979.6" y="131.8" width="15" height="14.2" fill="#1560c8" stroke="#4aa8f0" stroke-width="0.8" stroke-dasharray="1 0.8"/><path d="M982.5 140.5 L992.3 131.0 Q994.8 129.5 995.2 130.0 Q995.6 131.0 993.8 133.0 L984.5 142.0" fill="#282828" stroke="#d8d8d8" stroke-width="1.3" stroke-linejoin="round"/><path d="M975.5 147.0 Q980 147.3 981 144.0 Q982 141.5 984.5 142.0 L982.5 140.5 Q979 141.7 977.5 143.5 Q976.8 145.0 975.5 147.0 Z" fill="#4aa8f0"/><path d="M972.8 177 V158 H994.5 V177 H972.8 M977.3 158 V177 M972.8 161.4 H994.5" fill="none" stroke="#c8c8c8" stroke-width="1.3"/><rect x="977.6" y="161.6" width="16.8" height="11" fill="#1560c8" stroke="#4aa8f0" stroke-width="0.8" stroke-dasharray="1 0.8"/><path d="M982.5 171.5 L992.3 162.0 Q994.8 160.5 995.2 161.0 Q995.6 162.0 993.8 164.0 L984.5 173.0" fill="#282828" stroke="#d8d8d8" stroke-width="1.3" stroke-linejoin="round"/><path d="M975.5 178.0 Q980 178.3 981 175.0 Q982 172.5 984.5 173.0 L982.5 171.5 Q979 172.7 977.5 174.5 Q976.8 176.0 975.5 178.0 Z" fill="#4aa8f0"/></g></svg>
<div style="position:absolute;white-space:nowrap;font-family:'Liberation Sans', sans-serif;font-size:15.55px;line-height:15.55px;font-weight:400;color:#f2f2f2;top:97.23px;-webkit-text-stroke:0.30px #f2f2f2;left:1003.80px;transform-origin:0 0;transform:scaleX(1.0348);">Conditional Formatting</div>
<svg style="position:absolute;left:1175.20px;top:101.80px;" width="9.00" height="6.40" viewBox="0 0 9.00 6.40"><polyline points="1,1 4.5,5.4 8.0,1" fill="none" stroke="#e6e6e6" stroke-width="2.2" stroke-linecap="round" stroke-linejoin="round"/></svg>
<div style="position:absolute;white-space:nowrap;font-family:'Liberation Sans', sans-serif;font-size:15.55px;line-height:15.55px;font-weight:400;color:#f2f2f2;top:128.83px;-webkit-text-stroke:0.30px #f2f2f2;left:1003.80px;transform-origin:0 0;transform:scaleX(1.0086);">Format as Table</div>
<svg style="position:absolute;left:1125.50px;top:133.30px;" width="9.00" height="6.40" viewBox="0 0 9.00 6.40"><polyline points="1,1 4.5,5.4 8.0,1" fill="none" stroke="#e6e6e6" stroke-width="2.2" stroke-linecap="round" stroke-linejoin="round"/></svg>
<div style="position:absolute;white-space:nowrap;font-family:'Liberation Sans', sans-serif;font-size:15.55px;line-height:15.55px;font-weight:400;color:#f2f2f2;top:159.63px;-webkit-text-stroke:0.30px #f2f2f2;left:1003.80px;transform-origin:0 0;transform:scaleX(1.0097);">Cell Styles</div>
<svg style="position:absolute;left:1087.50px;top:164.30px;" width="9.00" height="6.40" viewBox="0 0 9.00 6.40"><polyline points="1,1 4.5,5.4 8.0,1" fill="none" stroke="#e6e6e6" stroke-width="2.2" stroke-linecap="round" stroke-linejoin="round"/></svg>
<div style="position:absolute;left:1202.85px;top:96.00px;width:1.50px;height:87.50px;background:#4a4a4a;"></div>
<svg style="position:absolute;left:1215.00px;top:94.00px;" width="35.00" height="24.00" viewBox="0 0 35.00 24.00"><g transform="translate(-1215,-94.0)"><rect x="1223" y="95.0" width="21" height="18.4" fill="none" stroke="#c8c8c8" stroke-width="1.5"/><path d="M1230.2 95.0 V113.4 M1237.4 95.0 V113.4 M1223 99.0 H1244 M1223 108.3 H1244" stroke="#c8c8c8" stroke-width="1.2"/><rect x="1230" y="99.5" width="14.5" height="9.8" fill="#1560c8" stroke="#4aa8f0" stroke-width="1" stroke-dasharray="1.2 0.8"/><path d="M1236 104.5 H1223.5 M1227.5 100.5 L1223.3 104.5 L1227.5 108.5" fill="none" stroke="#3da3e8" stroke-width="1.8"/></g></svg>
<div style="position:absolute;white-space:nowrap;font-family:'Liberation Sans', sans-serif;font-size:15.55px;line-height:15.55px;font-weight:400;color:#f2f2f2;top:97.43px;-webkit-text-stroke:0.30px #f2f2f2;left:1253.60px;transform-origin:0 0;transform:scaleX(1.0134);">Insert</div>
<svg style="position:absolute;left:1302.50px;top:101.80px;" width="9.00" height="6.40" viewBox="0 0 9.00 6.40"><polyline points="1,1 4.5,5.4 8.0,1" fill="none" stroke="#e6e6e6" stroke-width="2.2" stroke-linecap="round" stroke-linejoin="round"/></svg>
<svg style="position:absolute;left:1215.00px;top:125.00px;" width="35.00" height="24.00" viewBox="0 0 35.00 24.00"><g transform="translate(-1215,-125)"><path d="M1223 131 V126.5 H1244 V131 M1223 140.5 V145.4 H1244 V140.5 M1230.2 126.5 V131 M1237.4 126.5 V131 M1230.2 140.5 V145.4 M1237.4 140.5 V145.4" fill="none" stroke="#c8c8c8" stroke-width="1.5"/><rect x="1226.5" y="132" width="8" height="7.5" fill="#1560c8" stroke="#4aa8f0" stroke-width="1" stroke-dasharray="1.2 0.8"/><path d="M1237.3 132 L1244.3 139.3 M1244.3 132 L1237.3 139.3" stroke="#e84040" stroke-width="1.7"/></g></svg>
<div style="position:absolute;white-space:nowrap;font-family:'Liberation Sans', sans-serif;font-size:15.55px;line-height:15.55px;font-weight:400;color:#f2f2f2;top:128.83px;-webkit-text-stroke:0.30px #f2f2f2;left:1253.60px;transform-origin:0 0;">Delete</div>
<svg style="position:absolute;left:1308.10px;top:133.30px;" width="9.00" height="6.40" viewBox="0 0 9.00 6.40"><polyline points="1,1 4.5,5.4 8.0,1" fill="none" stroke="#e6e6e6" stroke-width="2.2" stroke-linecap="round" stroke-linejoin="round"/></svg>
<svg style="position:absolute;left:1215.00px;top:153.00px;" width="35.00" height="28.00" viewBox="0 0 35.00 28.00"><g transform="translate(-1215,-153)"><rect x="1223" y="159" width="21" height="19" fill="none" stroke="#c8c8c8" stroke-width="1.5"/><path d="M1230.2 159 V178 M1237.4 159 V178 M1223 164 H1244 M1223 172.8 H1244" stroke="#c8c8c8" stroke-width="1.2"/><rect x="1227.8" y="164" width="11" height="8.6" fill="#1560c8" stroke="#4aa8f0" stroke-width="1" stroke-dasharray="1.2 0.8"/><path d="M1227 157.2 H1240.5 M1227 155.3 V159.2 M1240.5 155.3 V159.2" stroke="#3da3e8" stroke-width="1.6"/></g></svg>
<div style="position:absolute;white-space:nowrap;font-family:'Liberation Sans', sans-serif;font-size:15.55px;line-height:15.55px;font-weight:400;color:#f2f2f2;top:159.63px;-webkit-text-stroke:0.30px #f2f2f2;left:1253.60px;transform-origin:0 0;transform:scaleX(1.0028);">Format</div>
<svg style="position:absolute;left:1312.50px;top:164.30px;" width="9.00" height="6.40" viewBox="0 0 9.00 6.40"><polyline points="1,1 4.5,5.4 8.0,1" fill="none" stroke="#e6e6e6" stroke-width="2.2" stroke-linecap="round" stroke-linejoin="round"/></svg>
<div style="position:absolute;left:1340.25px;top:96.00px;width:1.50px;height:87.50px;background:#4a4a4a;"></div>
<svg style="position:absolute;left:1355.00px;top:90.00px;" width="30.00" height="30.00" viewBox="0 0 30.00 30.00"><path d="M1379.3 97.8 V95.7 H1362.6 L1369.2 105 L1362.6 114 H1379.3 V112" transform="translate(-1355,-90)" fill="none" stroke="#d8d8d8" stroke-width="1.3" stroke-linejoin="miter"/></svg>
<svg style="position:absolute;left:1390.50px;top:101.80px;" width="9.00" height="6.40" viewBox="0 0 9.00 6.40"><polyline points="1,1 4.5,5.4 8.0,1" fill="none" stroke="#e6e6e6" stroke-width="2.2" stroke-linecap="round" stroke-linejoin="round"/></svg>
<svg style="position:absolute;left:1358.00px;top:124.00px;" width="26.00" height="24.00" viewBox="0 0 26.00 24.00"><rect x="1.5" y="2" width="22" height="19.5" fill="none" stroke="#d0d0d0" stroke-width="1.5"/><path d="M1.5 6 H23.5" stroke="#d0d0d0" stroke-width="1.3"/><path d="M12.5 8 V17 M8.5 13.5 L12.5 17.5 L16.5 13.5" fill="none" stroke="#3da3e8" stroke-width="1.7"/></svg>
<svg style="position:absolute;left:1390.50px;top:133.30px;" width="9.00" height="6.40" viewBox="0 0 9.00 6.40"><polyline points="1,1 4.5,5.4 8.0,1" fill="none" stroke="#e6e6e6" stroke-width="2.2" stroke-linecap="round" stroke-linejoin="round"/></svg>
<svg style="position:absolute;left:1355.00px;top:150.00px;" width="32.00" height="32.00" viewBox="0 0 32.00 32.00"><g transform="translate(-1355,-150)"><path d="M1360.2 170 L1364.6 165.5 L1371.9 173 L1367.5 177.4 Z" fill="#b04fcc"/><path d="M1373.6 156.3 L1380.9 164 L1367.5 177.4 L1360.2 170 Z" fill="none" stroke="#d488ec" stroke-width="1.3" stroke-linejoin="round"/><path d="M1364.6 165.5 L1371.9 173" stroke="#d488ec" stroke-width="1.1"/><path d="M1363.5 170 L1365 168.5 M1366 172.5 L1367.5 171 M1368.5 175 L1370 173.5" stroke="#5a1f70" stroke-width="0.9"/></g></svg>
<svg style="position:absolute;left:1390.50px;top:164.30px;" width="9.00" height="6.40" viewBox="0 0 9.00 6.40"><polyline points="1,1 4.5,5.4 8.0,1" fill="none" stroke="#e6e6e6" stroke-width="2.2" stroke-linecap="round" stroke-linejoin="round"/></svg>
<svg style="position:absolute;left:1408.00px;top:94.00px;" width="22.00" height="24.00" viewBox="0 0 22.00 24.00"><path d="M1412.8 114.5 L1419.2 97.8 L1425.6 114.5 M1414.9 109 H1423.5" transform="translate(-1408,-94)" fill="none" stroke="#3da3e8" stroke-width="1.6"/></svg>
<svg style="position:absolute;left:1408.00px;top:114.00px;" width="22.00" height="24.00" viewBox="0 0 22.00 24.00"><path d="M1413.2 118.2 H1424.3 L1413.4 133.7 H1424.8" transform="translate(-1408,-114)" fill="none" stroke="#d8d8d8" stroke-width="1.3"/></svg>
<svg style="position:absolute;left:1427.00px;top:104.00px;" width="27.00" height="27.00" viewBox="0 0 27.00 27.00"><path d="M2.5 2.5 H24 V5 L16 13 V24 H10.5 V13 L2.5 5 Z" fill="none" stroke="#d0d0d0" stroke-width="1.6" stroke-linejoin="round"/></svg>
<svg style="position:absolute;left:1461.10px;top:113.30px;" width="9.00" height="6.40" viewBox="0 0 9.00 6.40"><polyline points="1,1 4.5,5.4 8.0,1" fill="none" stroke="#e6e6e6" stroke-width="2.2" stroke-linecap="round" stroke-linejoin="round"/></svg>
<div style="position:absolute;white-space:nowrap;font-family:'Liberation Sans', sans-serif;font-size:15.55px;line-height:15.55px;font-weight:400;color:#f0f0f0;top:145.13px;-webkit-text-stroke:0.45px #f0f0f0;left:1417.40px;transform-origin:0 0;transform:scaleX(1.0200);">Sort &amp;</div>
<div style="position:absolute;white-space:nowrap;font-family:'Liberation Sans', sans-serif;font-size:15.55px;line-height:15.55px;font-weight:400;color:#f0f0f0;top:162.23px;-webkit-text-stroke:0.45px #f0f0f0;left:1422.00px;transform-origin:0 0;transform:scaleX(1.0415);">Filter</div>
<svg style="position:absolute;left:1478.00px;top:93.00px;" width="46.00" height="47.00" viewBox="0 0 46.00 47.00"><circle cx="29.4" cy="18" r="14.2" fill="none" stroke="#d6d6d6" stroke-width="1.6"/><path d="M19.5 28.5 L3.5 44.5" stroke="#d6d6d6" stroke-width="1.6" stroke-linecap="round"/></svg>
<svg style="position:absolute;left:1532.00px;top:113.30px;" width="9.00" height="6.40" viewBox="0 0 9.00 6.40"><polyline points="1,1 4.5,5.4 8.0,1" fill="none" stroke="#e6e6e6" stroke-width="2.2" stroke-linecap="round" stroke-linejoin="round"/></svg>
<div style="position:absolute;white-space:nowrap;font-family:'Liberation Sans', sans-serif;font-size:15.55px;line-height:15.55px;font-weight:400;color:#f0f0f0;top:145.13px;-webkit-text-stroke:0.45px #f0f0f0;left:1487.00px;transform-origin:0 0;transform:scaleX(0.9945);">Find &amp;</div>
<div style="position:absolute;white-space:nowrap;font-family:'Liberation Sans', sans-serif;font-size:15.55px;line-height:15.55px;font-weight:400;color:#f0f0f0;top:162.23px;-webkit-text-stroke:0.45px #f0f0f0;left:1487.00px;transform-origin:0 0;transform:scaleX(1.0339);">Select</div>
<div style="position:absolute;left:1559.75px;top:96.00px;width:1.50px;height:87.50px;background:#4a4a4a;"></div>
<svg style="position:absolute;left:1582.00px;top:93.00px;" width="46.00" height="46.00" viewBox="0 0 46.00 46.00"><rect x="2.5" y="2.8" width="40.5" height="40.5" fill="none" stroke="#c8441c" stroke-width="1.6"/><rect x="6.5" y="6.8" width="15" height="15" fill="none" stroke="#c8441c" stroke-width="1.5"/><rect x="24.5" y="6.8" width="15" height="15" fill="none" stroke="#c8441c" stroke-width="1.5"/><rect x="6.5" y="24.8" width="15" height="15" fill="none" stroke="#c8441c" stroke-width="1.5"/><rect x="24.5" y="24.8" width="15" height="15" fill="none" stroke="#c8441c" stroke-width="1.5"/></svg>
<div style="position:absolute;white-space:nowrap;font-family:'Liberation Sans', sans-serif;font-size:15.55px;line-height:15.55px;font-weight:400;color:#f0f0f0;top:145.13px;-webkit-text-stroke:0.45px #f0f0f0;left:1578.00px;transform-origin:0 0;transform:scaleX(1.0432);">Add-ins</div>
<div style="position:absolute;left:1650.55px;top:96.00px;width:1.50px;height:87.50px;background:#4a4a4a;"></div>
<svg style="position:absolute;left:1660.00px;top:88.00px;" width="60.00" height="52.00" viewBox="0 0 60.00 52.00"><defs><linearGradient id="cpL" x1="0" y1="0" x2="0" y2="1"><stop offset="0" stop-color="#2f8fe0"/><stop offset="0.35" stop-color="#2fb0c8"/><stop offset="0.65" stop-color="#5cc45a"/><stop offset="1" stop-color="#f2c418"/></linearGradient><linearGradient id="cpR" x1="0" y1="0" x2="0" y2="1"><stop offset="0" stop-color="#a64fd8"/><stop offset="0.45" stop-color="#e8559a"/><stop offset="1" stop-color="#f0a030"/></linearGradient></defs><g transform="translate(-1660,-88)"><path d="M1699.5 106.8 H1711.5 Q1716.5 106.8 1715.3 111.5 L1709.8 130.5 Q1708.6 135 1704 135 H1689 Q1683.6 135 1685 130.5 L1693 110.5 Q1694.5 106.8 1699.5 106.8 Z" fill="url(#cpR)"/><path d="M1682.5 125 H1697 L1693.5 134.8 H1689 Q1683.6 135 1685 130.5 Z" fill="#e85a5a"/><path d="M1683 97.5 H1699.5 Q1704.5 97.5 1703.3 102 L1695 124.5 Q1694 126 1690.5 126 H1677.5 Q1672.5 126 1673.8 121.5 L1679.5 101.5 Q1680.6 97.5 1683 97.5 Z" fill="url(#cpL)"/><path d="M1692 97.5 H1699.5 Q1704.5 97.5 1703.3 102 L1702 106.8 H1699 Q1697 102 1692 97.5 Z" fill="#1466c8"/><path d="M1696.5 107 L1691.2 124.5" stroke="#1e1e1e" stroke-width="2.6" stroke-linecap="round"/></g></svg>
<div style="position:absolute;white-space:nowrap;font-family:'Liberation Sans', sans-serif;font-size:15.55px;line-height:15.55px;font-weight:400;color:#f0f0f0;top:145.13px;-webkit-text-stroke:0.45px #f0f0f0;left:1669.00px;transform-origin:0 0;transform:scaleX(1.0391);">Copilot</div>
<div style="position:absolute;left:1737.95px;top:96.00px;width:1.50px;height:87.50px;background:#4a4a4a;"></div>
<svg style="position:absolute;left:1758.00px;top:93.00px;" width="44.60" height="45.60" viewBox="0 0 44.60 45.60"><rect x="0" y="0" width="44.6" height="45.6" fill="#d9744d"/><circle cx="22.3" cy="22.8" r="4.2" fill="#faf6f0"/><path d="M22.30 19.80 L22.30 6.80" stroke="#faf6f0" stroke-width="2.6" stroke-linecap="round"/><path d="M23.71 20.15 L29.11 10.00" stroke="#faf6f0" stroke-width="2.6" stroke-linecap="round"/><path d="M24.76 21.08 L33.36 15.06" stroke="#faf6f0" stroke-width="2.6" stroke-linecap="round"/><path d="M25.27 22.38 L38.14 20.57" stroke="#faf6f0" stroke-width="2.6" stroke-linecap="round"/><path d="M25.15 23.73 L35.61 27.13" stroke="#faf6f0" stroke-width="2.6" stroke-linecap="round"/><path d="M24.53 24.81 L33.82 33.17" stroke="#faf6f0" stroke-width="2.6" stroke-linecap="round"/><path d="M23.42 25.58 L27.36 35.32" stroke="#faf6f0" stroke-width="2.6" stroke-linecap="round"/><path d="M22.04 25.79 L20.91 38.74" stroke="#faf6f0" stroke-width="2.6" stroke-linecap="round"/><path d="M20.71 25.34 L14.88 34.67" stroke="#faf6f0" stroke-width="2.6" stroke-linecap="round"/><path d="M19.70 24.30 L9.31 30.30" stroke="#faf6f0" stroke-width="2.6" stroke-linecap="round"/><path d="M19.30 22.90 L6.31 23.36" stroke="#faf6f0" stroke-width="2.6" stroke-linecap="round"/><path d="M19.58 21.53 L10.06 17.09" stroke="#faf6f0" stroke-width="2.6" stroke-linecap="round"/><path d="M20.45 20.44 L13.37 11.37" stroke="#faf6f0" stroke-width="2.6" stroke-linecap="round"/></svg>
<div style="position:absolute;white-space:nowrap;font-family:'Liberation Sans', sans-serif;font-size:15.55px;line-height:15.55px;font-weight:400;color:#f0f0f0;top:145.13px;-webkit-text-stroke:0.45px #f0f0f0;left:1756.00px;transform-origin:0 0;transform:scaleX(0.9898);">Claude</div>
<div style="position:absolute;left:1822.95px;top:96.00px;width:1.50px;height:87.50px;background:#4a4a4a;"></div>
<svg style="position:absolute;left:1849.60px;top:92.60px;" width="46.00" height="46.00" viewBox="0 0 46.00 46.00"><circle cx="23" cy="23" r="23" fill="#ffffff"/><g transform="translate(8,8) scale(1.25)"><path d="M22.2819 9.8211a5.9847 5.9847 0 0 0-.5157-4.9108 6.0462 6.0462 0 0 0-6.5098-2.9A6.0651 6.0651 0 0 0 4.9807 4.1818a5.9847 5.9847 0 0 0-3.9977 2.9 6.0462 6.0462 0 0 0 .7427 7.0966 5.98 5.98 0 0 0 .511 4.9107 6.051 6.051 0 0 0 6.5146 2.9001A5.9847 5.9847 0 0 0 13.2599 24a6.0557 6.0557 0 0 0 5.7718-4.2058 5.9894 5.9894 0 0 0 3.9977-2.9001 6.0557 6.0557 0 0 0-.7475-7.0729zm-9.022 12.6081a4.4755 4.4755 0 0 1-2.8764-1.0408l.1419-.0804 4.7783-2.7582a.7948.7948 0 0 0 .3927-.6813v-6.7369l2.02 1.1686a.071.071 0 0 1 .038.052v5.5826a4.504 4.504 0 0 1-4.4945 4.4944zm-9.6607-4.1254a4.4708 4.4708 0 0 1-.5346-3.0137l.142.0852 4.783 2.7582a.7712.7712 0 0 0 .7806 0l5.8428-3.3685v2.3324a.0804.0804 0 0 1-.0332.0615L9.74 19.9502a4.4992 4.4992 0 0 1-6.1408-1.6464zM2.3408 7.8956a4.485 4.485 0 0 1 2.3655-1.9728V11.6a.7664.7664 0 0 0 .3879.6765l5.8144 3.3543-2.0201 1.1685a.0757.0757 0 0 1-.071 0l-4.8303-2.7865A4.504 4.504 0 0 1 2.3408 7.872zm16.5963 3.8558L13.1038 8.364 15.1192 7.2a.0757.0757 0 0 1 .071 0l4.8303 2.7913a4.4944 4.4944 0 0 1-.6765 8.1042v-5.6772a.79.79 0 0 0-.407-.667zm2.0107-3.0231l-.142-.0852-4.7735-2.7818a.7759.7759 0 0 0-.7854 0L9.409 9.2297V6.8974a.0662.0662 0 0 1 .0284-.0615l4.8303-2.7866a4.4992 4.4992 0 0 1 6.6802 4.66zM8.3065 12.863l-2.02-1.1638a.0804.0804 0 0 1-.038-.0567V6.0742a4.4992 4.4992 0 0 1 7.3757-3.4537l-.142.0805L8.704 5.459a.7948.7948 0 0 0-.3927.6813zm1.0976-2.3654l2.602-1.4998 2.6069 1.4998v2.9994l-2.5974 1.4997-2.6067-1.4997Z" fill="#111"/></g></svg>
<div style="position:absolute;white-space:nowrap;font-family:'Liberation Sans', sans-serif;font-size:15.55px;line-height:15.55px;font-weight:400;color:#f0f0f0;top:145.13px;-webkit-text-stroke:0.45px #f0f0f0;left:1841.70px;transform-origin:0 0;transform:scaleX(0.9612);">ChatGPT</div>
<div style="position:absolute;left:0.00px;top:189.50px;width:114.20px;height:36.00px;background:#262626;border-right:1.2px solid #3a3a3a;box-sizing:border-box;"></div>
<div style="position:absolute;white-space:nowrap;font-family:'Liberation Sans', sans-serif;font-size:17.44px;line-height:17.44px;font-weight:400;color:#e6e6e6;top:200.22px;-webkit-text-stroke:0.30px #e6e6e6;left:9.00px;transform-origin:0 0;transform:scaleX(0.9859);">Q34</div>
<svg style="position:absolute;left:100.00px;top:193.00px;" width="15.00" height="30.00" viewBox="0 0 15.00 30.00"><polygon points="2.3,10.7 7.5,2.5 12.7,10.7" fill="#c8c8c8"/><polygon points="2.3,19 7.5,27.7 12.7,19" fill="#c8c8c8"/></svg>
<svg style="position:absolute;left:134.00px;top:200.00px;" width="20.00" height="20.00" viewBox="0 0 20.00 20.00"><path d="M3 3 L17 17 M17 3 L3 17" stroke="#555" stroke-width="3"/></svg>
<svg style="position:absolute;left:173.00px;top:200.00px;" width="26.00" height="20.00" viewBox="0 0 26.00 20.00"><path d="M3 9.5 L9 16 L22 3.5" fill="none" stroke="#555" stroke-width="3"/></svg>
<div style="position:absolute;white-space:nowrap;font-family:'Liberation Serif', serif;font-size:21.37px;line-height:21.37px;font-weight:400;color:#9a9a9a;top:199.71px;left:208.50px;transform-origin:0 0;transform:scaleX(1.1521);font-style:italic;">fx</div>
<svg style="position:absolute;left:235.50px;top:206.25px;" width="11.00" height="7.00" viewBox="0 0 11.00 7.00"><polyline points="1,1 5.5,6.0 10.0,1" fill="none" stroke="#e6e6e6" stroke-width="1.6" stroke-linecap="round" stroke-linejoin="round"/></svg>
<div style="position:absolute;left:249.30px;top:194.30px;width:1723.00px;height:28.20px;background:#393939;border-radius:5px;"></div>
<div style="position:absolute;left:1972.80px;top:195.90px;width:30.00px;height:25.40px;background:#222222;border-radius:4px;border:1px solid #333;box-sizing:border-box;"></div>
<svg style="position:absolute;left:1981.00px;top:203.00px;" width="16.00" height="13.00" viewBox="0 0 16.00 13.00"><polygon points="2.3,2 12.8,2 7.5,11" fill="#c8c8c8"/></svg>
<div style="position:absolute;left:1509.00px;top:230.50px;width:491.00px;height:872.00px;background:#1f1f1f;"></div>
<div style="position:absolute;left:1509.00px;top:230.50px;width:1.50px;height:872.00px;background:#0e0e0e;"></div>
<div style="position:absolute;left:1510.50px;top:230.50px;width:246.50px;height:38.00px;background:#1c1c1c;"></div>
<div style="position:absolute;left:1757.00px;top:230.50px;width:243.00px;height:37.50px;background:#1a1a1a;border-left:1.3px solid #454545;border-bottom:1.3px solid #454545;box-sizing:border-box;"></div>
<div style="position:absolute;white-space:nowrap;font-family:'Liberation Sans', sans-serif;font-size:19.62px;line-height:19.62px;font-weight:400;color:#e8e8e8;top:240.27px;-webkit-text-stroke:0.55px #e8e8e8;left:1522.20px;transform-origin:0 0;transform:scaleX(0.9646);">Claude</div>
<svg style="position:absolute;left:1726.00px;top:239.00px;" width="22.00" height="22.00" viewBox="0 0 22.00 22.00"><circle cx="10.7" cy="10.7" r="9.8" fill="#8c8c8c"/><path d="M6.5 6.5 L14.9 14.9 M14.9 6.5 L6.5 14.9" stroke="#1c1c1c" stroke-width="1.8"/></svg>
<div style="position:absolute;white-space:nowrap;font-family:'Liberation Sans', sans-serif;font-size:19.62px;line-height:19.62px;font-weight:400;color:#e8e8e8;top:240.27px;-webkit-text-stroke:0.55px #e8e8e8;left:1770.00px;transform-origin:0 0;transform:scaleX(0.9355);">ChatGPT</div>
<div style="position:absolute;left:1527.00px;top:286.00px;width:462.00px;height:799.00px;background:#f9f8f5;border-radius:30px;"></div>
<div style="position:absolute;left:1959.50px;top:276.00px;width:38.70px;height:38.70px;background:rgba(70,70,70,0.73);border-radius:7px;border:1px solid #4a4a4a;box-sizing:border-box;"></div>
<div style="position:absolute;white-space:nowrap;font-family:'Liberation Serif', serif;font-size:25.95px;line-height:25.95px;font-weight:700;color:#f2f2f2;top:282.91px;left:1975.40px;transform-origin:0 0;font-style:italic;">i</div>
<svg style="position:absolute;left:1696.50px;top:500.50px;" width="122.00" height="93.00" viewBox="0 0 122.00 93.00"><g fill="none" stroke="#141414" stroke-width="2.6" stroke-linecap="round" stroke-linejoin="round"><path d="M1.8 2.5 Q40 1 118 3.5 L118.5 89 Q60 90.5 1.5 88.5 Q2.5 45 1.8 2.5 Z"/><path d="M2 15.5 Q60 14 118 16"/><path d="M15.3 3 V15"/></g><rect x="24.5" y="28.5" width="13" height="50" fill="#e7e4de"/><rect x="37.5" y="28.5" width="57" height="12" fill="#e7e4de"/><g fill="none" stroke="#141414" stroke-width="2.4" stroke-linecap="round" stroke-linejoin="round"><path d="M24 27.5 Q60 26 95.5 27.5 L96 77.5 Q60 78.5 24 78 Z"/><path d="M24 40 Q60 38.5 96 40.5 M24 52.2 Q60 50.5 96 52.5 M24 64.3 Q60 63 96 64.5"/><path d="M37.5 28 V78 M66 28 V78"/></g></svg>
<div style="position:absolute;white-space:nowrap;font-family:'Liberation Serif', serif;font-size:44.27px;line-height:44.27px;font-weight:400;color:#3d3d3a;top:652.40px;-webkit-text-stroke:0.70px #3d3d3a;left:1577.20px;transform-origin:0 0;transform:scaleX(0.9804);">Claude, right in your</div>
<div style="position:absolute;white-space:nowrap;font-family:'Liberation Serif', serif;font-size:44.27px;line-height:44.27px;font-weight:400;color:#3d3d3a;top:703.60px;-webkit-text-stroke:0.70px #3d3d3a;left:1658.70px;transform-origin:0 0;transform:scaleX(1.0152);">workbooks</div>
<div style="position:absolute;white-space:nowrap;font-family:'Liberation Sans', sans-serif;font-size:18.46px;line-height:18.46px;font-weight:400;color:#4b4b47;top:763.76px;-webkit-text-stroke:0.20px #4b4b47;left:1591.00px;transform-origin:0 0;transform:scaleX(0.9220);">Analyze sheets, update assumptions, debug</div>
<div style="position:absolute;white-space:nowrap;font-family:'Liberation Sans', sans-serif;font-size:18.46px;line-height:18.46px;font-weight:400;color:#4b4b47;top:786.66px;-webkit-text-stroke:0.20px #4b4b47;left:1603.60px;transform-origin:0 0;transform:scaleX(0.9516);">errors—with citations and transparency.</div>
<div style="position:absolute;left:1709.25px;top:841.60px;width:97.60px;height:49.80px;background:#141413;border-radius:11px;"></div>
<div style="position:absolute;white-space:nowrap;font-family:'Liberation Sans', sans-serif;font-size:21.51px;line-height:21.51px;font-weight:400;color:#ffffff;top:855.17px;-webkit-text-stroke:0.35px #ffffff;left:1732.20px;transform-origin:0 0;transform:scaleX(0.8820);">Log in</div>
<div style="position:absolute;left:0.00px;top:1065.00px;width:1509.00px;height:37.30px;background:#2a2a2a;"></div>
<div style="position:absolute;left:0.00px;top:1065.00px;width:80.30px;height:37.30px;background:#383838;"></div>
<svg style="position:absolute;left:10.00px;top:1072.00px;" width="60.00" height="25.00" viewBox="0 0 60.00 25.00"><polygon points="16,5 16,20.4 5.4,12.7" fill="#686868"/><polygon points="38,5 38,20.4 48.3,12.7" fill="#686868"/></svg>
<div style="position:absolute;left:79.60px;top:1068.00px;width:1.60px;height:31.00px;background:#4e4e4e;"></div>
<div style="position:absolute;left:81.00px;top:1065.00px;width:111.50px;height:37.30px;background:#212121;"></div>
<div style="position:absolute;white-space:nowrap;font-family:'Liberation Sans', sans-serif;font-size:18.31px;line-height:18.31px;font-weight:400;color:#8a8a8a;top:1074.68px;left:109.00px;transform-origin:0 0;transform:scaleX(0.8888);">Sheet1</div>
<div style="position:absolute;left:192.50px;top:1065.00px;width:181.50px;height:32.00px;background:#f2f2f2;border-radius:0 0 4px 4px;"></div>
<div style="position:absolute;left:197.00px;top:1069.30px;width:172.60px;height:24.20px;background:linear-gradient(#e8e8e8,#8c8c8c);border-radius:2px;"></div>
<div style="position:absolute;white-space:nowrap;font-family:'Liberation Sans', sans-serif;font-size:18.31px;line-height:18.31px;font-weight:700;color:#1f8b3e;top:1073.88px;left:217.80px;transform-origin:0 0;transform:scaleX(0.9244);">CEO Dashboard</div>
<div style="position:absolute;left:374.00px;top:1065.00px;width:1135.00px;height:37.30px;background:#313131;"></div>
<svg style="position:absolute;left:393.00px;top:1075.00px;" width="19.00" height="19.00" viewBox="0 0 19.00 19.00"><path d="M9.5 2 V17 M2 9.5 H17" stroke="#d0d0d0" stroke-width="2.6"/></svg>
<div style="position:absolute;left:427.30px;top:1068.00px;width:1.50px;height:31.00px;background:#4a4a4a;"></div>
<div style="position:absolute;left:0.00px;top:1102.30px;width:2000.00px;height:29.70px;background:linear-gradient(#474747,#3e3e3e);"></div>
<div style="position:absolute;left:0.00px;top:1101.60px;width:1509.00px;height:1.20px;background:#1c1c1c;"></div>
<div style="position:absolute;white-space:nowrap;font-family:'Liberation Sans', sans-serif;font-size:18.02px;line-height:18.02px;font-weight:400;color:#e0e0e0;top:1110.13px;left:29.70px;transform-origin:0 0;transform:scaleX(0.9158);">Ready</div>
<svg style="position:absolute;left:100.00px;top:1104.00px;" width="35.00" height="28.00" viewBox="0 0 35.00 28.00"><g transform="translate(-100,-1104)" fill="none" stroke="#ececec" stroke-width="1.35" stroke-linejoin="round" stroke-linecap="round"><circle cx="115.2" cy="1111.2" r="2.6"/><path d="M107.8 1110.9 Q105.6 1112.2 107.6 1114.6 L111.3 1116.3 L110.1 1126.3 Q110 1128.7 112.3 1128.6 Q113.6 1128.4 114 1126.6 L115.1 1121.5 L116.4 1124.5"/><path d="M119.2 1116.8 L122.8 1115.1 Q124.8 1113.6 123.3 1111.3 Q121.8 1110 119.3 1111.9 Q115.2 1114.7 111.3 1111.9 Q109.4 1110.3 107.8 1110.9"/><path d="M117.6 1119 L126.6 1128.4 M126.6 1119 L117.6 1128.4"/></g></svg>
<div style="position:absolute;white-space:nowrap;font-family:'Liberation Sans', sans-serif;font-size:18.02px;line-height:18.02px;font-weight:400;color:#e0e0e0;top:1110.13px;left:136.00px;transform-origin:0 0;">Accessibility: Investigate</div>
<div style="position:absolute;left:1553.80px;top:1102.30px;width:53.20px;height:29.70px;background:#5c5c5c;"></div>
<svg style="position:absolute;left:1569.00px;top:1107.00px;" width="24.00" height="24.00" viewBox="0 0 24.00 24.00"><rect x="2" y="2.5" width="18.5" height="18.5" fill="none" stroke="#f0f0f0" stroke-width="1.5"/><path d="M2 8.7 H20.5 M2 14.8 H20.5 M8.2 2.5 V21 M14.3 2.5 V21" stroke="#f0f0f0" stroke-width="1.3"/></svg>
<svg style="position:absolute;left:1619.00px;top:1107.00px;" width="24.00" height="24.00" viewBox="0 0 24.00 24.00"><rect x="2" y="2.5" width="20" height="18.5" fill="none" stroke="#f0f0f0" stroke-width="1.5"/><rect x="5.5" y="5.5" width="13" height="12.5" fill="none" stroke="#f0f0f0" stroke-width="1.2"/><path d="M8 9 H16 M8 12 H16 M8 15 H16" stroke="#f0f0f0" stroke-width="1.1"/></svg>
<svg style="position:absolute;left:1669.00px;top:1107.00px;" width="25.00" height="24.00" viewBox="0 0 25.00 24.00"><rect x="2" y="2.5" width="20.5" height="18.5" fill="none" stroke="#f0f0f0" stroke-width="1.5"/><path d="M7.5 2.5 V13 H15 V2.5" fill="none" stroke="#f0f0f0" stroke-width="1.5"/></svg>
<div style="position:absolute;left:1718.00px;top:1117.60px;width:11.50px;height:2.60px;background:#f0f0f0;"></div>
<div style="position:absolute;left:1739.50px;top:1116.00px;width:141.50px;height:6.00px;background:#707070;border-radius:3px;"></div>
<div style="position:absolute;left:1797.50px;top:1108.80px;width:25.00px;height:20.00px;background:#d8d8d8;border-radius:10px;"></div>
<svg style="position:absolute;left:1888.00px;top:1109.00px;" width="17.00" height="17.00" viewBox="0 0 17.00 17.00"><path d="M8.5 2 V15 M2 8.5 H15" stroke="#f0f0f0" stroke-width="2.6"/></svg>
<div style="position:absolute;white-space:nowrap;font-family:'Liberation Sans', sans-serif;font-size:17.44px;line-height:17.44px;font-weight:400;color:#e6e6e6;top:1110.62px;left:1927.00px;transform-origin:0 0;transform:scaleX(0.9752);">100%</div>
<svg style="position:absolute;left:0.00px;top:0.00px;" width="14.00" height="14.00" viewBox="0 0 14.00 14.00"><path d="M0 0 H11.5 A11.5 11.5 0 0 0 0 11.5 Z" fill="#e9e9e9"/><path d="M11.5 0.4 A11.1 11.1 0 0 0 0.4 11.5" fill="none" stroke="#6a6a6a" stroke-width="0.9"/></svg>
<svg style="position:absolute;left:1986.00px;top:0.00px;" width="14.00" height="14.00" viewBox="0 0 14.00 14.00"><path d="M14 0 H2.5 A11.5 11.5 0 0 1 14 11.5 Z" fill="#2d6a98"/><path d="M2.5 0.4 A11.1 11.1 0 0 1 13.6 11.5" fill="none" stroke="#6a6a6a" stroke-width="0.9"/></svg>
<svg style="position:absolute;left:0.00px;top:1118.00px;" width="14.00" height="14.00" viewBox="0 0 14.00 14.00"><path d="M0 14 V2.5 A11.5 11.5 0 0 0 11.5 14 Z" fill="#111"/><path d="M0.4 2.5 A11.1 11.1 0 0 0 11.5 13.6" fill="none" stroke="#6a6a6a" stroke-width="0.9"/></svg>
<svg style="position:absolute;left:1986.00px;top:1118.00px;" width="14.00" height="14.00" viewBox="0 0 14.00 14.00"><path d="M14 14 V2.5 A11.5 11.5 0 0 1 2.5 14 Z" fill="#111"/><path d="M13.6 2.5 A11.1 11.1 0 0 1 2.5 13.6" fill="none" stroke="#6a6a6a" stroke-width="0.9"/></svg>
</body></html>
